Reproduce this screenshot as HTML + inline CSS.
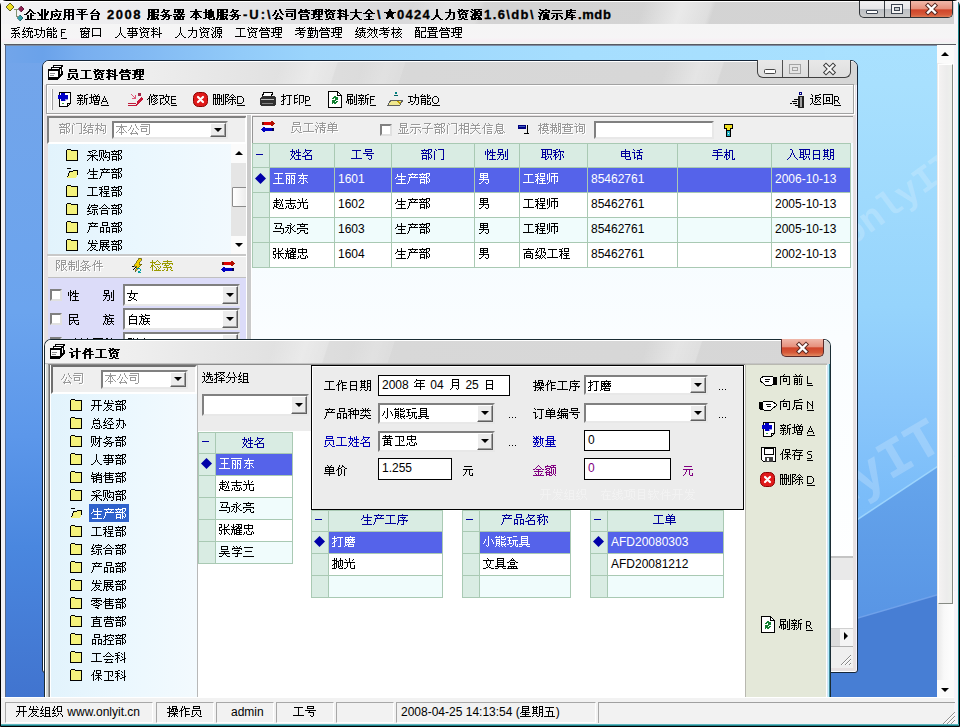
<!DOCTYPE html>
<html><head><meta charset="utf-8"><title>企业应用平台 2008</title><style>
html,body{margin:0;padding:0}
body{width:960px;height:727px;overflow:hidden;position:relative;background:#f1f1f5;font-family:"Liberation Sans",sans-serif;font-size:12px;color:#000}
div{position:absolute;box-sizing:border-box}
.t{white-space:nowrap;line-height:14px;height:14px}
.tb{white-space:nowrap;line-height:14px;height:14px;font-weight:bold;-webkit-text-stroke:.3px #000}
u{text-decoration:underline}
svg{position:absolute;overflow:visible}
.p{position:static;display:inline-block;vertical-align:top;shape-rendering:crispEdges;fill:none}
.g{color:#9a9a9a;text-shadow:1px 1px 0 #fff}
.sunk{border:1px solid;border-color:#808080 #fff #fff #808080}
.cb{background:#fff;border:2px solid;border-color:#808080 #e8e8e8 #e8e8e8 #808080}
.btn{background:#ececec;border:1px solid;border-color:#fff #606060 #606060 #fff;box-shadow:inset -1px -1px 0 #a0a0a0}
.arr{width:0;height:0;border-left:4px solid transparent;border-right:4px solid transparent;border-top:4px solid #000}
.hd{background:#d9ece3;color:#00009c;text-align:center;line-height:22px;white-space:nowrap;overflow:hidden}
.cell{white-space:nowrap;overflow:hidden;padding-left:2px}
</style></head>
<body>
<svg width="0" height="0" style="left:0;top:0"><defs><path id="g41" d="M3 4.5h1M3 5.5h1M2 6.5h1M4 6.5h1M2 7.5h1M4 7.5h1M1 8.5h1M5 8.5h1M1 9.5h5M0 10.5h1M6 10.5h1M0 11.5h1M6 11.5h1"/><path id="g44" d="M0 4.5h5M0 5.5h1M5 5.5h1M0 6.5h1M6 6.5h1M0 7.5h1M6 7.5h1M0 8.5h1M6 8.5h1M0 9.5h1M6 9.5h1M0 10.5h1M5 10.5h1M0 11.5h5"/><path id="g45" d="M0 4.5h5M0 5.5h1M0 6.5h1M0 7.5h5M0 8.5h1M0 9.5h1M0 10.5h1M0 11.5h5"/><path id="g46" d="M0 4.5h5M0 5.5h1M0 6.5h1M0 7.5h4M0 8.5h1M0 9.5h1M0 10.5h1M0 11.5h1"/><path id="g4c" d="M0 4.5h1M0 5.5h1M0 6.5h1M0 7.5h1M0 8.5h1M0 9.5h1M0 10.5h1M0 11.5h5"/><path id="g4e" d="M0 4.5h1M5 4.5h1M0 5.5h2M5 5.5h1M0 6.5h1M2 6.5h1M5 6.5h1M0 7.5h1M3 7.5h1M5 7.5h1M0 8.5h1M4 8.5h2M0 9.5h1M5 9.5h1M0 10.5h1M5 10.5h1M0 11.5h1M5 11.5h1"/><path id="g4f" d="M2 4.5h3M1 5.5h1M5 5.5h1M0 6.5h1M6 6.5h1M0 7.5h1M6 7.5h1M0 8.5h1M6 8.5h1M0 9.5h1M6 9.5h1M1 10.5h1M5 10.5h1M2 11.5h3"/><path id="g50" d="M0 4.5h4M0 5.5h1M4 5.5h1M0 6.5h1M4 6.5h1M0 7.5h1M4 7.5h1M0 8.5h4M0 9.5h1M0 10.5h1M0 11.5h1"/><path id="g52" d="M0 4.5h4M0 5.5h1M4 5.5h1M0 6.5h1M4 6.5h1M0 7.5h1M4 7.5h1M0 8.5h4M0 9.5h1M3 9.5h1M0 10.5h1M4 10.5h1M0 11.5h1M5 11.5h1"/><path id="g53" d="M1 4.5h4M0 5.5h1M0 6.5h1M1 7.5h3M4 8.5h1M4 9.5h1M4 10.5h1M0 11.5h4"/><path id="g2605" d="M5 2.5h1M5 3.5h1M4 4.5h3M0 5.5h11M2 6.5h7M3 7.5h5M3 8.5h5M3 9.5h2M6 9.5h2M2 10.5h2M7 10.5h2M2 11.5h1M8 11.5h1"/><path id="g4e09" d="M1 3.5h9M2 7.5h7M0 12.5h11"/><path id="g4e1a" d="M4 2.5h1M7 2.5h1M4 3.5h1M7 3.5h1M4 4.5h1M7 4.5h1M10 4.5h1M0 5.5h1M4 5.5h1M7 5.5h1M10 5.5h1M1 6.5h1M4 6.5h1M7 6.5h1M9 6.5h1M2 7.5h1M4 7.5h1M7 7.5h1M9 7.5h1M2 8.5h1M4 8.5h1M7 8.5h2M4 9.5h1M7 9.5h1M4 10.5h1M7 10.5h1M4 11.5h1M7 11.5h1M0 12.5h11"/><path id="g4e1c" d="M5 2.5h1M5 3.5h1M1 4.5h10M4 5.5h1M6 5.5h1M3 6.5h1M6 6.5h1M2 7.5h8M6 8.5h1M3 9.5h1M6 9.5h1M8 9.5h1M2 10.5h1M6 10.5h1M9 10.5h1M1 11.5h1M6 11.5h1M10 11.5h1M4 12.5h3"/><path id="g4e3d" d="M0 2.5h11M1 4.5h4M6 4.5h4M1 5.5h1M4 5.5h1M6 5.5h1M9 5.5h1M1 6.5h1M4 6.5h1M6 6.5h1M9 6.5h1M1 7.5h2M4 7.5h1M6 7.5h2M9 7.5h1M1 8.5h1M3 8.5h2M6 8.5h1M8 8.5h2M1 9.5h1M4 9.5h1M6 9.5h1M9 9.5h1M1 10.5h1M4 10.5h1M6 10.5h1M9 10.5h1M1 11.5h1M4 11.5h1M6 11.5h1M9 11.5h1M1 12.5h1M3 12.5h2M6 12.5h1M8 12.5h2"/><path id="g4e8b" d="M5 2.5h1M0 3.5h11M2 4.5h1M5 4.5h1M8 4.5h1M2 5.5h1M5 5.5h1M8 5.5h1M1 6.5h9M5 7.5h1M9 7.5h1M0 8.5h11M5 9.5h1M9 9.5h1M1 10.5h9M5 11.5h1M3 12.5h3"/><path id="g4e94" d="M1 3.5h9M5 4.5h1M5 5.5h1M5 6.5h1M2 7.5h7M4 8.5h1M8 8.5h1M4 9.5h1M8 9.5h1M4 10.5h1M8 10.5h1M4 11.5h1M8 11.5h1M0 12.5h11"/><path id="g4ea7" d="M5 2.5h1M1 3.5h10M3 4.5h1M8 4.5h1M4 5.5h1M7 5.5h1M2 6.5h9M2 7.5h1M2 8.5h1M2 9.5h1M1 10.5h1M1 11.5h1M0 12.5h1"/><path id="g4eae" d="M5 2.5h1M0 3.5h11M3 4.5h1M7 4.5h1M3 5.5h5M0 7.5h11M0 8.5h1M10 8.5h1M3 9.5h5M3 10.5h1M7 10.5h1M2 11.5h1M7 11.5h1M10 11.5h1M0 12.5h2M8 12.5h3"/><path id="g4eba" d="M5 2.5h1M5 3.5h1M5 4.5h1M5 5.5h1M5 6.5h1M5 7.5h1M4 8.5h1M6 8.5h1M4 9.5h1M6 9.5h1M3 10.5h1M7 10.5h1M2 11.5h1M8 11.5h1M0 12.5h2M9 12.5h2"/><path id="g4ef6" d="M3 2.5h1M7 2.5h1M3 3.5h1M5 3.5h1M7 3.5h1M2 4.5h1M5 4.5h1M7 4.5h1M2 5.5h1M4 5.5h6M1 6.5h3M7 6.5h1M0 7.5h1M2 7.5h1M7 7.5h1M2 8.5h1M4 8.5h7M2 9.5h1M7 9.5h1M2 10.5h1M7 10.5h1M2 11.5h1M7 11.5h1M2 12.5h1M7 12.5h1"/><path id="g4ef7" d="M3 2.5h1M6 2.5h1M3 3.5h1M6 3.5h2M2 4.5h1M5 4.5h1M8 4.5h1M2 5.5h3M9 5.5h2M1 6.5h2M5 6.5h1M8 6.5h1M0 7.5h1M2 7.5h1M5 7.5h1M8 7.5h1M2 8.5h1M5 8.5h1M8 8.5h1M2 9.5h1M5 9.5h1M8 9.5h1M2 10.5h1M5 10.5h1M8 10.5h1M2 11.5h1M4 11.5h1M8 11.5h1M2 12.5h2M8 12.5h1"/><path id="g4f01" d="M5 2.5h1M5 3.5h2M4 4.5h1M7 4.5h1M3 5.5h1M8 5.5h1M2 6.5h1M6 6.5h1M9 6.5h2M0 7.5h2M6 7.5h1M3 8.5h1M6 8.5h3M3 9.5h1M6 9.5h1M3 10.5h1M6 10.5h1M3 11.5h1M6 11.5h1M1 12.5h10"/><path id="g4f17" d="M5 2.5h1M5 3.5h1M4 4.5h1M6 4.5h1M3 5.5h1M7 5.5h1M2 6.5h1M8 6.5h1M0 7.5h2M3 7.5h1M7 7.5h1M9 7.5h2M3 8.5h1M7 8.5h1M3 9.5h1M7 9.5h1M2 10.5h1M4 10.5h1M6 10.5h1M8 10.5h1M1 11.5h1M5 11.5h1M9 11.5h1M0 12.5h1M4 12.5h1M10 12.5h1"/><path id="g4f1a" d="M5 2.5h1M4 3.5h1M6 3.5h1M3 4.5h1M7 4.5h1M2 5.5h1M8 5.5h1M0 6.5h2M3 6.5h5M9 6.5h2M1 9.5h9M4 10.5h1M3 11.5h1M8 11.5h1M2 12.5h8"/><path id="g4f5c" d="M3 2.5h1M5 2.5h1M3 3.5h1M5 3.5h1M2 4.5h1M5 4.5h6M2 5.5h1M4 5.5h1M6 5.5h1M1 6.5h3M6 6.5h1M0 7.5h1M2 7.5h1M6 7.5h4M2 8.5h1M6 8.5h1M2 9.5h1M6 9.5h1M2 10.5h1M6 10.5h5M2 11.5h1M6 11.5h1M2 12.5h1M6 12.5h1"/><path id="g4fdd" d="M3 2.5h1M5 2.5h5M3 3.5h1M5 3.5h1M9 3.5h1M2 4.5h1M5 4.5h1M9 4.5h1M2 5.5h1M5 5.5h5M1 6.5h2M7 6.5h1M0 7.5h1M2 7.5h1M4 7.5h7M2 8.5h1M7 8.5h1M2 9.5h1M6 9.5h3M2 10.5h1M5 10.5h1M7 10.5h1M9 10.5h1M2 11.5h1M4 11.5h1M7 11.5h1M10 11.5h1M2 12.5h1M7 12.5h1"/><path id="g4fe1" d="M3 2.5h1M6 2.5h1M3 3.5h1M7 3.5h1M2 4.5h1M4 4.5h7M2 5.5h1M1 6.5h2M5 6.5h5M0 7.5h1M2 7.5h1M2 8.5h1M5 8.5h5M2 9.5h1M2 10.5h1M5 10.5h5M2 11.5h1M5 11.5h1M9 11.5h1M2 12.5h1M5 12.5h5"/><path id="g4fee" d="M3 2.5h1M6 2.5h1M3 3.5h1M6 3.5h5M2 4.5h1M4 4.5h2M7 4.5h1M9 4.5h1M2 5.5h1M4 5.5h1M8 5.5h1M1 6.5h2M4 6.5h1M6 6.5h2M9 6.5h1M0 7.5h1M2 7.5h1M4 7.5h2M8 7.5h1M10 7.5h1M2 8.5h1M4 8.5h1M7 8.5h1M9 8.5h1M2 9.5h1M4 9.5h1M6 9.5h1M8 9.5h1M2 10.5h1M4 10.5h1M7 10.5h1M10 10.5h1M2 11.5h1M8 11.5h2M2 12.5h1M5 12.5h3"/><path id="g5143" d="M2 3.5h8M1 6.5h10M4 7.5h1M7 7.5h1M4 8.5h1M7 8.5h1M3 9.5h1M7 9.5h1M3 10.5h1M7 10.5h1M10 10.5h1M2 11.5h1M7 11.5h1M10 11.5h1M1 12.5h1M8 12.5h3"/><path id="g5149" d="M5 2.5h1M1 3.5h1M5 3.5h1M9 3.5h1M2 4.5h1M5 4.5h1M8 4.5h1M5 5.5h1M0 6.5h11M3 7.5h1M6 7.5h1M3 8.5h1M6 8.5h1M3 9.5h1M6 9.5h1M10 9.5h1M3 10.5h1M6 10.5h1M10 10.5h1M2 11.5h1M6 11.5h1M10 11.5h1M0 12.5h2M7 12.5h4"/><path id="g5165" d="M3 2.5h2M5 3.5h1M5 4.5h1M5 5.5h1M4 6.5h1M6 6.5h1M4 7.5h1M6 7.5h1M3 8.5h1M7 8.5h1M3 9.5h1M7 9.5h1M2 10.5h1M8 10.5h1M1 11.5h1M9 11.5h1M0 12.5h1M10 12.5h1"/><path id="g5168" d="M5 2.5h1M4 3.5h1M6 3.5h1M3 4.5h1M7 4.5h1M2 5.5h1M8 5.5h1M0 6.5h2M3 6.5h5M9 6.5h2M5 7.5h1M5 8.5h1M3 9.5h5M5 10.5h1M5 11.5h1M1 12.5h9"/><path id="g516c" d="M7 2.5h1M3 3.5h1M7 3.5h1M3 4.5h1M8 4.5h1M2 5.5h1M8 5.5h1M2 6.5h1M5 6.5h1M9 6.5h1M1 7.5h1M5 7.5h1M10 7.5h1M0 8.5h1M4 8.5h1M4 9.5h1M7 9.5h1M3 10.5h1M8 10.5h1M2 11.5h8M3 12.5h1M9 12.5h1"/><path id="g5173" d="M2 2.5h1M8 2.5h1M3 3.5h1M7 3.5h1M1 4.5h9M5 5.5h1M5 6.5h1M0 7.5h10M5 8.5h1M4 9.5h1M6 9.5h1M3 10.5h1M7 10.5h1M2 11.5h1M8 11.5h1M0 12.5h2M9 12.5h2"/><path id="g5177" d="M2 2.5h7M2 3.5h1M8 3.5h1M2 4.5h7M2 5.5h1M8 5.5h1M2 6.5h7M2 7.5h1M8 7.5h1M2 8.5h7M2 9.5h1M8 9.5h1M0 10.5h11M3 11.5h1M7 11.5h1M0 12.5h3M8 12.5h3"/><path id="g5206" d="M3 2.5h1M7 2.5h1M3 3.5h1M7 3.5h1M2 4.5h1M8 4.5h1M2 5.5h1M8 5.5h1M1 6.5h1M9 6.5h1M0 7.5h1M2 7.5h7M10 7.5h1M4 8.5h1M8 8.5h1M4 9.5h1M8 9.5h1M3 10.5h1M8 10.5h1M2 11.5h1M8 11.5h1M0 12.5h2M6 12.5h2"/><path id="g5220" d="M0 2.5h3M4 2.5h3M10 2.5h1M0 3.5h1M2 3.5h1M4 3.5h1M6 3.5h1M8 3.5h1M10 3.5h1M0 4.5h1M2 4.5h1M4 4.5h1M6 4.5h1M8 4.5h1M10 4.5h1M0 5.5h1M2 5.5h1M4 5.5h1M6 5.5h1M8 5.5h1M10 5.5h1M0 6.5h9M10 6.5h1M0 7.5h1M2 7.5h1M4 7.5h1M6 7.5h1M8 7.5h1M10 7.5h1M0 8.5h1M2 8.5h1M4 8.5h1M6 8.5h1M8 8.5h1M10 8.5h1M0 9.5h1M2 9.5h1M4 9.5h1M6 9.5h1M8 9.5h1M10 9.5h1M0 10.5h1M2 10.5h1M4 10.5h1M6 10.5h1M10 10.5h1M0 11.5h1M2 11.5h1M4 11.5h1M6 11.5h1M10 11.5h1M0 12.5h1M2 12.5h2M5 12.5h2M8 12.5h3"/><path id="g522b" d="M1 2.5h5M10 2.5h1M1 3.5h1M5 3.5h1M10 3.5h1M1 4.5h1M5 4.5h1M8 4.5h1M10 4.5h1M1 5.5h5M8 5.5h1M10 5.5h1M3 6.5h1M8 6.5h1M10 6.5h1M0 7.5h7M8 7.5h1M10 7.5h1M3 8.5h1M6 8.5h1M8 8.5h1M10 8.5h1M2 9.5h1M6 9.5h1M8 9.5h1M10 9.5h1M2 10.5h1M6 10.5h1M10 10.5h1M1 11.5h1M6 11.5h1M10 11.5h1M0 12.5h1M4 12.5h2M8 12.5h3"/><path id="g5236" d="M3 2.5h1M10 2.5h1M1 3.5h1M3 3.5h1M8 3.5h1M10 3.5h1M1 4.5h6M8 4.5h1M10 4.5h1M0 5.5h1M3 5.5h1M8 5.5h1M10 5.5h1M0 6.5h7M8 6.5h1M10 6.5h1M3 7.5h1M8 7.5h1M10 7.5h1M1 8.5h6M8 8.5h1M10 8.5h1M1 9.5h1M3 9.5h1M6 9.5h1M8 9.5h1M10 9.5h1M1 10.5h1M3 10.5h1M6 10.5h1M10 10.5h1M1 11.5h1M3 11.5h1M5 11.5h2M10 11.5h1M3 12.5h1M8 12.5h3"/><path id="g5237" d="M1 2.5h6M10 2.5h1M1 3.5h1M6 3.5h1M10 3.5h1M1 4.5h6M8 4.5h1M10 4.5h1M1 5.5h1M4 5.5h1M8 5.5h1M10 5.5h1M1 6.5h1M4 6.5h1M8 6.5h1M10 6.5h1M1 7.5h6M8 7.5h1M10 7.5h1M1 8.5h2M4 8.5h1M6 8.5h1M8 8.5h1M10 8.5h1M0 9.5h1M2 9.5h1M4 9.5h1M6 9.5h1M8 9.5h1M10 9.5h1M0 10.5h1M2 10.5h1M4 10.5h1M6 10.5h1M8 10.5h1M10 10.5h1M2 11.5h1M4 11.5h3M10 11.5h1M4 12.5h1M8 12.5h3"/><path id="g524d" d="M3 2.5h1M8 2.5h1M4 3.5h1M7 3.5h1M1 4.5h10M2 6.5h4M7 6.5h1M9 6.5h1M2 7.5h1M5 7.5h1M7 7.5h1M9 7.5h1M2 8.5h4M7 8.5h1M9 8.5h1M2 9.5h1M5 9.5h1M7 9.5h1M9 9.5h1M2 10.5h4M7 10.5h1M9 10.5h1M2 11.5h1M5 11.5h1M9 11.5h1M2 12.5h1M4 12.5h2M7 12.5h3"/><path id="g529b" d="M5 2.5h1M5 3.5h1M5 4.5h1M1 5.5h9M5 6.5h1M9 6.5h1M5 7.5h1M9 7.5h1M4 8.5h1M9 8.5h1M4 9.5h1M9 9.5h1M3 10.5h1M9 10.5h1M2 11.5h1M9 11.5h1M1 12.5h1M6 12.5h3"/><path id="g529e" d="M4 2.5h1M4 3.5h1M1 4.5h8M4 5.5h1M8 5.5h1M4 6.5h1M8 6.5h1M2 7.5h1M4 7.5h1M8 7.5h2M2 8.5h1M4 8.5h1M8 8.5h1M10 8.5h1M1 9.5h1M3 9.5h1M8 9.5h1M10 9.5h1M3 10.5h1M8 10.5h1M2 11.5h1M6 11.5h1M8 11.5h1M1 12.5h1M7 12.5h1"/><path id="g529f" d="M7 2.5h1M7 3.5h1M0 4.5h5M7 4.5h1M2 5.5h1M5 5.5h6M2 6.5h1M7 6.5h1M10 6.5h1M2 7.5h1M7 7.5h1M10 7.5h1M2 8.5h1M7 8.5h1M10 8.5h1M2 9.5h3M6 9.5h1M10 9.5h1M0 10.5h2M6 10.5h1M10 10.5h1M5 11.5h1M10 11.5h1M3 12.5h2M8 12.5h2"/><path id="g52a1" d="M3 2.5h1M3 3.5h6M2 4.5h2M7 4.5h1M1 5.5h1M4 5.5h1M6 5.5h1M5 6.5h1M3 7.5h2M6 7.5h2M0 8.5h3M5 8.5h1M8 8.5h3M2 9.5h7M4 10.5h1M8 10.5h1M3 11.5h1M8 11.5h1M1 12.5h2M6 12.5h2"/><path id="g52e4" d="M2 2.5h1M4 2.5h1M8 2.5h1M0 3.5h7M8 3.5h1M2 4.5h1M4 4.5h1M8 4.5h1M1 5.5h10M1 6.5h1M3 6.5h1M5 6.5h1M8 6.5h1M10 6.5h1M1 7.5h1M3 7.5h1M5 7.5h1M8 7.5h1M10 7.5h1M1 8.5h5M8 8.5h1M10 8.5h1M3 9.5h1M8 9.5h1M10 9.5h1M1 10.5h5M7 10.5h1M10 10.5h1M3 11.5h1M7 11.5h1M10 11.5h1M0 12.5h7M9 12.5h2"/><path id="g5355" d="M3 2.5h1M7 2.5h1M4 3.5h1M6 3.5h1M1 4.5h9M1 5.5h1M5 5.5h1M9 5.5h1M1 6.5h9M1 7.5h1M5 7.5h1M9 7.5h1M1 8.5h9M5 9.5h1M0 10.5h11M5 11.5h1M5 12.5h1"/><path id="g536b" d="M1 3.5h9M5 4.5h1M9 4.5h1M5 5.5h1M9 5.5h1M5 6.5h1M9 6.5h1M5 7.5h1M7 7.5h1M9 7.5h1M5 8.5h1M8 8.5h1M5 9.5h1M5 10.5h1M5 11.5h1M1 12.5h10"/><path id="g5370" d="M4 2.5h1M1 3.5h3M6 3.5h5M1 4.5h1M6 4.5h1M10 4.5h1M1 5.5h1M6 5.5h1M10 5.5h1M1 6.5h4M6 6.5h1M10 6.5h1M1 7.5h1M6 7.5h1M10 7.5h1M1 8.5h1M6 8.5h1M10 8.5h1M1 9.5h1M4 9.5h1M6 9.5h1M10 9.5h1M1 10.5h3M6 10.5h1M8 10.5h2M1 11.5h1M6 11.5h1M6 12.5h1"/><path id="g53d1" d="M2 2.5h1M5 2.5h1M8 2.5h1M2 3.5h1M5 3.5h1M9 3.5h1M1 4.5h1M5 4.5h1M1 5.5h10M4 6.5h1M4 7.5h5M4 8.5h1M8 8.5h1M3 9.5h1M5 9.5h1M7 9.5h1M2 10.5h1M6 10.5h1M1 11.5h1M5 11.5h1M7 11.5h2M0 12.5h1M3 12.5h2M9 12.5h2"/><path id="g53e3" d="M1 3.5h9M1 4.5h1M9 4.5h1M1 5.5h1M9 5.5h1M1 6.5h1M9 6.5h1M1 7.5h1M9 7.5h1M1 8.5h1M9 8.5h1M1 9.5h1M9 9.5h1M1 10.5h9M1 11.5h1M9 11.5h1"/><path id="g53f0" d="M5 2.5h1M4 3.5h1M3 4.5h1M7 4.5h1M2 5.5h1M8 5.5h1M1 6.5h9M9 7.5h1M2 8.5h7M2 9.5h1M8 9.5h1M2 10.5h1M8 10.5h1M2 11.5h1M8 11.5h1M2 12.5h7"/><path id="g53f7" d="M2 2.5h7M2 3.5h1M8 3.5h1M2 4.5h7M0 6.5h11M4 7.5h1M3 8.5h6M8 9.5h1M8 10.5h1M5 11.5h1M8 11.5h1M6 12.5h2"/><path id="g53f8" d="M1 2.5h9M9 3.5h1M0 4.5h8M9 4.5h1M9 5.5h1M1 6.5h6M9 6.5h1M1 7.5h1M6 7.5h1M9 7.5h1M1 8.5h1M6 8.5h1M9 8.5h1M1 9.5h6M9 9.5h1M9 10.5h1M9 11.5h1M6 12.5h3"/><path id="g5408" d="M5 2.5h1M4 3.5h1M6 3.5h1M3 4.5h1M7 4.5h1M2 5.5h1M8 5.5h1M0 6.5h2M3 6.5h5M9 6.5h2M2 8.5h7M2 9.5h1M8 9.5h1M2 10.5h1M8 10.5h1M2 11.5h7M2 12.5h1M8 12.5h1"/><path id="g540d" d="M3 2.5h1M3 3.5h7M3 4.5h1M8 4.5h1M2 5.5h1M4 5.5h1M7 5.5h1M1 6.5h1M5 6.5h2M5 7.5h1M3 8.5h7M0 9.5h4M9 9.5h1M3 10.5h1M9 10.5h1M3 11.5h1M9 11.5h1M3 12.5h7"/><path id="g540e" d="M7 2.5h3M2 3.5h5M2 4.5h1M2 5.5h9M2 6.5h1M2 7.5h1M2 8.5h1M4 8.5h6M2 9.5h1M4 9.5h1M9 9.5h1M1 10.5h1M4 10.5h1M9 10.5h1M1 11.5h1M4 11.5h6M0 12.5h1M4 12.5h1M9 12.5h1"/><path id="g5411" d="M4 2.5h1M3 3.5h1M0 4.5h10M0 5.5h1M9 5.5h1M0 6.5h1M3 6.5h4M9 6.5h1M0 7.5h1M3 7.5h1M6 7.5h1M9 7.5h1M0 8.5h1M3 8.5h1M6 8.5h1M9 8.5h1M0 9.5h1M3 9.5h4M9 9.5h1M0 10.5h1M9 10.5h1M0 11.5h1M9 11.5h1M0 12.5h1M7 12.5h3"/><path id="g5434" d="M2 2.5h7M2 3.5h1M8 3.5h1M2 4.5h1M8 4.5h1M2 5.5h7M2 7.5h8M5 8.5h1M0 9.5h11M4 10.5h1M6 10.5h1M3 11.5h1M7 11.5h1M0 12.5h3M8 12.5h3"/><path id="g5458" d="M2 2.5h7M2 3.5h1M8 3.5h1M2 4.5h7M1 6.5h9M1 7.5h1M9 7.5h1M1 8.5h1M5 8.5h1M9 8.5h1M1 9.5h1M5 9.5h1M9 9.5h1M1 10.5h1M4 10.5h1M6 10.5h1M9 10.5h1M3 11.5h1M7 11.5h1M0 12.5h3M8 12.5h3"/><path id="g54c1" d="M3 2.5h6M3 3.5h1M8 3.5h1M3 4.5h1M8 4.5h1M3 5.5h6M1 7.5h4M7 7.5h4M1 8.5h1M4 8.5h1M7 8.5h1M10 8.5h1M1 9.5h1M4 9.5h1M7 9.5h1M10 9.5h1M1 10.5h1M4 10.5h1M7 10.5h1M10 10.5h1M1 11.5h4M7 11.5h4M1 12.5h1M4 12.5h1M7 12.5h1M10 12.5h1"/><path id="g552e" d="M2 2.5h1M6 2.5h1M2 3.5h9M2 4.5h1M6 4.5h1M1 5.5h9M0 6.5h1M2 6.5h1M6 6.5h1M2 7.5h8M2 8.5h1M6 8.5h1M2 9.5h9M2 10.5h1M9 10.5h1M2 11.5h1M9 11.5h1M2 12.5h8"/><path id="g5668" d="M1 2.5h4M6 2.5h4M1 3.5h1M4 3.5h1M6 3.5h1M9 3.5h1M1 4.5h1M4 4.5h1M6 4.5h1M9 4.5h1M1 5.5h4M6 5.5h4M5 6.5h1M8 6.5h1M0 7.5h11M3 8.5h1M7 8.5h1M0 9.5h5M6 9.5h5M1 10.5h1M4 10.5h1M6 10.5h1M9 10.5h1M1 11.5h1M4 11.5h1M6 11.5h1M9 11.5h1M1 12.5h4M6 12.5h4"/><path id="g56de" d="M1 2.5h10M1 3.5h1M10 3.5h1M1 4.5h1M10 4.5h1M1 5.5h1M4 5.5h4M10 5.5h1M1 6.5h1M4 6.5h1M7 6.5h1M10 6.5h1M1 7.5h1M4 7.5h1M7 7.5h1M10 7.5h1M1 8.5h1M4 8.5h4M10 8.5h1M1 9.5h1M4 9.5h1M7 9.5h1M10 9.5h1M1 10.5h1M10 10.5h1M1 11.5h10M1 12.5h1M10 12.5h1"/><path id="g5728" d="M5 2.5h1M5 3.5h1M1 4.5h10M4 5.5h1M3 6.5h1M7 6.5h1M2 7.5h2M7 7.5h1M1 8.5h1M3 8.5h1M5 8.5h5M3 9.5h1M7 9.5h1M3 10.5h1M7 10.5h1M3 11.5h1M7 11.5h1M3 12.5h8"/><path id="g5730" d="M2 2.5h1M7 2.5h1M2 3.5h1M5 3.5h1M7 3.5h1M2 4.5h1M5 4.5h1M7 4.5h1M9 4.5h1M0 5.5h4M5 5.5h1M7 5.5h3M2 6.5h1M5 6.5h3M9 6.5h1M2 7.5h1M4 7.5h2M7 7.5h1M9 7.5h1M2 8.5h1M5 8.5h1M7 8.5h1M9 8.5h1M2 9.5h1M5 9.5h1M7 9.5h3M2 10.5h2M5 10.5h1M7 10.5h1M10 10.5h1M0 11.5h2M5 11.5h1M10 11.5h1M6 12.5h5"/><path id="g589e" d="M2 2.5h1M5 2.5h1M9 2.5h1M2 3.5h1M6 3.5h1M8 3.5h1M2 4.5h1M4 4.5h7M0 5.5h5M7 5.5h1M10 5.5h1M2 6.5h1M4 6.5h1M6 6.5h3M10 6.5h1M2 7.5h1M4 7.5h1M7 7.5h1M10 7.5h1M2 8.5h1M4 8.5h7M2 9.5h1M5 9.5h1M9 9.5h1M2 10.5h2M5 10.5h5M0 11.5h2M5 11.5h1M9 11.5h1M5 12.5h5"/><path id="g5927" d="M5 2.5h1M5 3.5h1M5 4.5h1M0 5.5h11M5 6.5h1M5 7.5h1M4 8.5h1M6 8.5h1M4 9.5h1M6 9.5h1M3 10.5h1M7 10.5h1M2 11.5h1M8 11.5h1M0 12.5h2M9 12.5h2"/><path id="g5973" d="M4 2.5h1M4 3.5h1M4 4.5h1M0 5.5h11M3 6.5h1M7 6.5h1M3 7.5h1M7 7.5h1M2 8.5h1M7 8.5h1M2 9.5h3M6 9.5h1M5 10.5h2M4 11.5h1M7 11.5h2M1 12.5h3M9 12.5h1"/><path id="g59d3" d="M2 2.5h1M8 2.5h1M2 3.5h1M6 3.5h1M8 3.5h1M0 4.5h5M6 4.5h1M8 4.5h1M2 5.5h1M4 5.5h1M6 5.5h5M2 6.5h1M4 6.5h2M8 6.5h1M1 7.5h1M4 7.5h1M8 7.5h1M1 8.5h1M3 8.5h1M6 8.5h5M2 9.5h2M8 9.5h1M2 10.5h1M4 10.5h1M8 10.5h1M1 11.5h1M4 11.5h1M8 11.5h1M0 12.5h1M5 12.5h6"/><path id="g5b50" d="M2 2.5h7M7 3.5h1M6 4.5h1M5 5.5h1M5 6.5h1M0 7.5h11M5 8.5h1M5 9.5h1M5 10.5h1M3 11.5h1M5 11.5h1M4 12.5h1"/><path id="g5b58" d="M4 2.5h1M0 3.5h11M3 4.5h1M2 5.5h1M4 5.5h6M2 6.5h1M8 6.5h1M1 7.5h2M7 7.5h1M0 8.5h1M2 8.5h9M2 9.5h1M7 9.5h1M2 10.5h1M7 10.5h1M2 11.5h1M7 11.5h1M2 12.5h1M5 12.5h3"/><path id="g5b66" d="M2 2.5h1M5 2.5h1M9 2.5h1M3 3.5h1M6 3.5h1M8 3.5h1M1 4.5h10M1 5.5h1M10 5.5h1M3 6.5h6M7 7.5h1M6 8.5h1M1 9.5h10M6 10.5h1M6 11.5h1M4 12.5h3"/><path id="g5c0f" d="M5 2.5h1M5 3.5h1M5 4.5h1M2 5.5h1M5 5.5h1M8 5.5h1M2 6.5h1M5 6.5h1M9 6.5h1M1 7.5h1M5 7.5h1M9 7.5h1M1 8.5h1M5 8.5h1M10 8.5h1M0 9.5h1M5 9.5h1M10 9.5h1M5 10.5h1M3 11.5h1M5 11.5h1M4 12.5h1"/><path id="g5c55" d="M1 2.5h9M1 3.5h1M9 3.5h1M1 4.5h9M1 5.5h1M4 5.5h1M7 5.5h1M1 6.5h9M1 7.5h1M4 7.5h1M7 7.5h1M1 8.5h10M1 9.5h1M3 9.5h1M6 9.5h1M9 9.5h1M1 10.5h1M3 10.5h1M7 10.5h2M0 11.5h1M3 11.5h1M5 11.5h1M8 11.5h1M0 12.5h1M3 12.5h2M9 12.5h2"/><path id="g5de5" d="M1 3.5h9M5 4.5h1M5 5.5h1M5 6.5h1M5 7.5h1M5 8.5h1M5 9.5h1M5 10.5h1M0 11.5h11"/><path id="g5e08" d="M2 2.5h1M4 2.5h7M0 3.5h1M2 3.5h1M7 3.5h1M0 4.5h1M2 4.5h1M7 4.5h1M0 5.5h1M2 5.5h1M4 5.5h7M0 6.5h1M2 6.5h1M4 6.5h1M7 6.5h1M10 6.5h1M0 7.5h1M2 7.5h1M4 7.5h1M7 7.5h1M10 7.5h1M0 8.5h1M2 8.5h1M4 8.5h1M7 8.5h1M10 8.5h1M2 9.5h1M4 9.5h1M7 9.5h1M10 9.5h1M2 10.5h1M4 10.5h1M7 10.5h1M9 10.5h2M1 11.5h1M7 11.5h1M0 12.5h1M7 12.5h1"/><path id="g5e73" d="M1 2.5h9M5 3.5h1M2 4.5h1M5 4.5h1M8 4.5h1M3 5.5h1M5 5.5h1M7 5.5h1M5 6.5h1M0 7.5h11M5 8.5h1M5 9.5h1M5 10.5h1M5 11.5h1M5 12.5h1"/><path id="g5e74" d="M2 2.5h1M2 3.5h9M1 4.5h1M6 4.5h1M0 5.5h1M6 5.5h1M2 6.5h8M2 7.5h1M6 7.5h1M2 8.5h1M6 8.5h1M0 9.5h11M6 10.5h1M6 11.5h1M6 12.5h1"/><path id="g5e8f" d="M5 2.5h1M1 3.5h10M1 4.5h1M1 5.5h1M3 5.5h6M1 6.5h1M5 6.5h1M7 6.5h1M1 7.5h1M6 7.5h1M1 8.5h10M1 9.5h1M6 9.5h1M9 9.5h1M1 10.5h1M6 10.5h1M0 11.5h1M6 11.5h1M0 12.5h1M4 12.5h3"/><path id="g5e93" d="M6 2.5h1M2 3.5h9M2 4.5h1M6 4.5h1M2 5.5h9M2 6.5h1M5 6.5h1M2 7.5h1M4 7.5h1M7 7.5h1M2 8.5h1M4 8.5h6M2 9.5h1M7 9.5h1M2 10.5h9M1 11.5h1M7 11.5h1M0 12.5h1M7 12.5h1"/><path id="g5e94" d="M5 2.5h1M6 3.5h1M1 4.5h10M1 5.5h1M1 6.5h1M5 6.5h1M9 6.5h1M1 7.5h1M3 7.5h1M6 7.5h1M9 7.5h1M1 8.5h1M4 8.5h1M6 8.5h1M9 8.5h1M1 9.5h1M4 9.5h1M8 9.5h1M1 10.5h1M8 10.5h1M0 11.5h1M7 11.5h1M0 12.5h1M3 12.5h8"/><path id="g5f00" d="M1 2.5h9M3 3.5h1M7 3.5h1M3 4.5h1M7 4.5h1M3 5.5h1M7 5.5h1M3 6.5h1M7 6.5h1M0 7.5h11M3 8.5h1M7 8.5h1M2 9.5h1M7 9.5h1M2 10.5h1M7 10.5h1M1 11.5h1M7 11.5h1M0 12.5h1M7 12.5h1"/><path id="g5f20" d="M0 2.5h3M5 2.5h1M9 2.5h1M2 3.5h1M5 3.5h1M9 3.5h1M2 4.5h1M5 4.5h1M8 4.5h1M0 5.5h3M5 5.5h3M0 6.5h1M5 6.5h1M0 7.5h1M3 7.5h8M0 8.5h3M5 8.5h1M7 8.5h1M2 9.5h1M5 9.5h1M7 9.5h1M2 10.5h1M5 10.5h1M8 10.5h1M0 11.5h1M2 11.5h1M5 11.5h2M9 11.5h1M1 12.5h1M5 12.5h1M10 12.5h1"/><path id="g5fd7" d="M5 2.5h1M5 3.5h1M0 4.5h11M5 5.5h1M5 6.5h1M1 7.5h9M5 8.5h1M3 9.5h1M6 9.5h1M9 9.5h1M1 10.5h1M3 10.5h1M6 10.5h1M8 10.5h1M10 10.5h1M1 11.5h1M3 11.5h1M8 11.5h1M10 11.5h1M0 12.5h1M4 12.5h5"/><path id="g5fe0" d="M5 2.5h1M1 3.5h9M1 4.5h1M5 4.5h1M9 4.5h1M1 5.5h1M5 5.5h1M9 5.5h1M1 6.5h9M5 7.5h1M5 8.5h1M3 9.5h1M6 9.5h1M9 9.5h1M1 10.5h1M3 10.5h1M8 10.5h1M10 10.5h1M1 11.5h1M3 11.5h1M8 11.5h1M10 11.5h1M0 12.5h1M4 12.5h5"/><path id="g6027" d="M2 2.5h1M7 2.5h1M2 3.5h1M5 3.5h1M7 3.5h1M0 4.5h1M2 4.5h2M5 4.5h1M7 4.5h1M0 5.5h1M2 5.5h1M4 5.5h7M0 6.5h1M2 6.5h1M4 6.5h1M7 6.5h1M0 7.5h1M2 7.5h2M7 7.5h1M2 8.5h1M5 8.5h5M2 9.5h1M7 9.5h1M2 10.5h1M7 10.5h1M2 11.5h1M7 11.5h1M2 12.5h1M4 12.5h7"/><path id="g603b" d="M3 2.5h1M7 2.5h1M4 3.5h1M6 3.5h1M2 4.5h7M2 5.5h1M8 5.5h1M2 6.5h1M8 6.5h1M2 7.5h7M2 8.5h1M8 8.5h1M5 9.5h1M9 9.5h1M1 10.5h1M3 10.5h1M6 10.5h1M8 10.5h1M10 10.5h1M1 11.5h1M3 11.5h1M8 11.5h1M10 11.5h1M0 12.5h1M4 12.5h5"/><path id="g606f" d="M4 2.5h1M2 3.5h7M2 4.5h1M8 4.5h1M2 5.5h7M2 6.5h1M8 6.5h1M2 7.5h7M2 8.5h1M8 8.5h1M2 9.5h7M1 10.5h1M3 10.5h1M5 10.5h1M9 10.5h1M1 11.5h1M3 11.5h1M6 11.5h1M8 11.5h1M10 11.5h1M0 12.5h1M4 12.5h5"/><path id="g624b" d="M6 2.5h4M1 3.5h5M5 4.5h1M1 5.5h9M5 6.5h1M5 7.5h1M0 8.5h11M5 9.5h1M5 10.5h1M5 11.5h1M4 12.5h2"/><path id="g6253" d="M2 2.5h1M2 3.5h1M5 3.5h6M0 4.5h5M8 4.5h1M2 5.5h1M8 5.5h1M2 6.5h1M4 6.5h1M8 6.5h1M2 7.5h2M8 7.5h1M1 8.5h2M8 8.5h1M0 9.5h1M2 9.5h1M8 9.5h1M2 10.5h1M8 10.5h1M2 11.5h1M8 11.5h1M0 12.5h3M6 12.5h3"/><path id="g629b" d="M2 2.5h1M4 2.5h1M8 2.5h1M2 3.5h1M4 3.5h1M8 3.5h1M0 4.5h5M7 4.5h4M2 5.5h1M4 5.5h3M8 5.5h1M10 5.5h1M2 6.5h1M4 6.5h1M6 6.5h1M8 6.5h1M10 6.5h1M2 7.5h3M6 7.5h1M8 7.5h1M10 7.5h1M1 8.5h2M4 8.5h1M6 8.5h1M8 8.5h1M10 8.5h1M0 9.5h1M2 9.5h1M4 9.5h1M6 9.5h1M8 9.5h1M10 9.5h1M2 10.5h1M4 10.5h1M6 10.5h2M9 10.5h1M2 11.5h1M4 11.5h1M6 11.5h1M10 11.5h1M0 12.5h4M7 12.5h4"/><path id="g62e9" d="M2 2.5h1M4 2.5h7M2 3.5h1M6 3.5h1M9 3.5h1M0 4.5h5M7 4.5h2M2 5.5h1M6 5.5h1M9 5.5h1M2 6.5h1M4 6.5h2M10 6.5h1M2 7.5h2M7 7.5h1M1 8.5h2M5 8.5h5M0 9.5h1M2 9.5h1M7 9.5h1M2 10.5h1M4 10.5h7M2 11.5h1M7 11.5h1M0 12.5h3M7 12.5h1"/><path id="g63a7" d="M2 2.5h1M7 2.5h1M2 3.5h1M4 3.5h7M0 4.5h5M10 4.5h1M2 5.5h1M6 5.5h1M8 5.5h1M2 6.5h1M5 6.5h1M9 6.5h1M2 7.5h3M10 7.5h1M1 8.5h2M5 8.5h5M0 9.5h1M2 9.5h1M7 9.5h1M2 10.5h1M7 10.5h1M2 11.5h1M7 11.5h1M0 12.5h3M4 12.5h7"/><path id="g64cd" d="M2 2.5h1M5 2.5h5M2 3.5h1M5 3.5h1M9 3.5h1M0 4.5h4M5 4.5h5M2 5.5h1M4 5.5h3M8 5.5h3M2 6.5h1M4 6.5h1M6 6.5h1M8 6.5h1M10 6.5h1M2 7.5h5M8 7.5h3M0 8.5h3M7 8.5h1M2 9.5h9M2 10.5h1M6 10.5h3M2 11.5h1M5 11.5h1M7 11.5h1M9 11.5h1M1 12.5h2M4 12.5h1M7 12.5h1M10 12.5h1"/><path id="g6539" d="M7 2.5h1M0 3.5h5M7 3.5h1M4 4.5h1M6 4.5h5M4 5.5h2M9 5.5h1M1 6.5h4M6 6.5h1M9 6.5h1M1 7.5h1M6 7.5h1M9 7.5h1M1 8.5h1M6 8.5h1M9 8.5h1M1 9.5h1M7 9.5h2M1 10.5h1M3 10.5h1M7 10.5h2M1 11.5h2M6 11.5h1M9 11.5h1M1 12.5h1M4 12.5h2M10 12.5h1"/><path id="g653f" d="M7 2.5h1M0 3.5h6M7 3.5h1M3 4.5h1M7 4.5h4M3 5.5h1M6 5.5h2M9 5.5h1M1 6.5h1M3 6.5h3M7 6.5h1M9 6.5h1M1 7.5h1M3 7.5h1M7 7.5h1M9 7.5h1M1 8.5h1M3 8.5h1M7 8.5h1M9 8.5h1M1 9.5h1M3 9.5h1M8 9.5h1M1 10.5h1M3 10.5h3M8 10.5h1M0 11.5h3M7 11.5h1M9 11.5h1M5 12.5h2M10 12.5h1"/><path id="g6548" d="M2 2.5h1M7 2.5h1M3 3.5h1M7 3.5h1M0 4.5h6M7 4.5h4M2 5.5h1M4 5.5h1M6 5.5h2M9 5.5h1M1 6.5h1M5 6.5h1M7 6.5h1M9 6.5h1M0 7.5h1M4 7.5h1M7 7.5h1M9 7.5h1M2 8.5h1M4 8.5h1M7 8.5h1M9 8.5h1M3 9.5h1M8 9.5h1M2 10.5h1M4 10.5h1M8 10.5h1M1 11.5h1M7 11.5h1M9 11.5h1M0 12.5h1M5 12.5h2M10 12.5h1"/><path id="g6570" d="M0 2.5h1M3 2.5h1M5 2.5h1M7 2.5h1M1 3.5h1M3 3.5h2M7 3.5h1M0 4.5h6M7 4.5h4M2 5.5h2M6 5.5h2M9 5.5h1M1 6.5h1M3 6.5h2M7 6.5h1M9 6.5h1M0 7.5h1M3 7.5h1M5 7.5h1M7 7.5h1M9 7.5h1M0 8.5h6M7 8.5h1M9 8.5h1M2 9.5h1M4 9.5h1M7 9.5h1M9 9.5h1M1 10.5h2M4 10.5h1M8 10.5h1M3 11.5h1M7 11.5h1M9 11.5h1M0 12.5h3M4 12.5h3M10 12.5h1"/><path id="g6587" d="M4 2.5h1M5 3.5h1M0 4.5h11M3 5.5h1M7 5.5h1M3 6.5h1M7 6.5h1M3 7.5h1M7 7.5h1M4 8.5h1M6 8.5h1M4 9.5h1M6 9.5h1M5 10.5h1M3 11.5h2M6 11.5h2M0 12.5h3M8 12.5h3"/><path id="g6599" d="M2 2.5h1M8 2.5h1M0 3.5h1M2 3.5h1M4 3.5h2M8 3.5h1M1 4.5h3M6 4.5h1M8 4.5h1M2 5.5h1M8 5.5h1M0 6.5h6M8 6.5h1M2 7.5h1M6 7.5h1M8 7.5h1M2 8.5h2M8 8.5h3M1 9.5h2M4 9.5h5M0 10.5h1M2 10.5h1M8 10.5h1M2 11.5h1M8 11.5h1M2 12.5h1M8 12.5h1"/><path id="g65b0" d="M3 2.5h1M9 2.5h2M0 3.5h6M7 3.5h2M1 4.5h1M5 4.5h1M7 4.5h1M2 5.5h1M4 5.5h1M7 5.5h1M0 6.5h6M7 6.5h4M3 7.5h1M7 7.5h1M9 7.5h1M0 8.5h6M7 8.5h1M9 8.5h1M3 9.5h1M7 9.5h1M9 9.5h1M1 10.5h1M3 10.5h1M5 10.5h1M7 10.5h1M9 10.5h1M0 11.5h1M3 11.5h1M6 11.5h1M9 11.5h1M2 12.5h2M5 12.5h1M9 12.5h1"/><path id="g65cf" d="M2 2.5h1M6 2.5h1M3 3.5h1M6 3.5h5M0 4.5h6M2 5.5h1M6 5.5h1M2 6.5h3M6 6.5h5M2 7.5h1M4 7.5h2M8 7.5h1M2 8.5h1M4 8.5h1M8 8.5h1M1 9.5h1M4 9.5h7M1 10.5h1M4 10.5h1M8 10.5h1M0 11.5h1M2 11.5h1M4 11.5h1M7 11.5h1M9 11.5h1M0 12.5h1M3 12.5h1M5 12.5h2M10 12.5h1"/><path id="g65e5" d="M2 3.5h7M2 4.5h1M8 4.5h1M2 5.5h1M8 5.5h1M2 6.5h1M8 6.5h1M2 7.5h7M2 8.5h1M8 8.5h1M2 9.5h1M8 9.5h1M2 10.5h1M8 10.5h1M2 11.5h7M2 12.5h1M8 12.5h1"/><path id="g661f" d="M2 2.5h7M2 3.5h1M8 3.5h1M2 4.5h7M2 5.5h1M8 5.5h1M2 6.5h7M2 7.5h1M5 7.5h1M1 8.5h9M0 9.5h1M5 9.5h1M2 10.5h7M5 11.5h1M0 12.5h11"/><path id="g663e" d="M2 2.5h7M2 3.5h1M8 3.5h1M2 4.5h7M2 5.5h1M8 5.5h1M2 6.5h7M4 7.5h1M6 7.5h1M1 8.5h1M4 8.5h1M6 8.5h1M9 8.5h1M2 9.5h1M4 9.5h1M6 9.5h1M9 9.5h1M2 10.5h1M4 10.5h1M6 10.5h1M8 10.5h1M4 11.5h1M6 11.5h1M0 12.5h11"/><path id="g6708" d="M3 2.5h7M3 3.5h1M9 3.5h1M3 4.5h1M9 4.5h1M3 5.5h7M3 6.5h1M9 6.5h1M3 7.5h1M9 7.5h1M3 8.5h7M3 9.5h1M9 9.5h1M3 10.5h1M9 10.5h1M2 11.5h1M7 11.5h1M9 11.5h1M1 12.5h1M8 12.5h1"/><path id="g670d" d="M1 2.5h4M6 2.5h5M1 3.5h1M4 3.5h1M6 3.5h1M10 3.5h1M1 4.5h1M4 4.5h1M6 4.5h1M10 4.5h1M1 5.5h4M6 5.5h1M8 5.5h3M1 6.5h1M4 6.5h1M6 6.5h1M1 7.5h1M4 7.5h1M6 7.5h5M1 8.5h4M6 8.5h1M10 8.5h1M1 9.5h1M4 9.5h1M6 9.5h1M8 9.5h2M1 10.5h1M4 10.5h1M6 10.5h1M9 10.5h1M0 11.5h1M4 11.5h1M6 11.5h1M8 11.5h1M10 11.5h1M0 12.5h1M3 12.5h2M6 12.5h2M10 12.5h1"/><path id="g671f" d="M1 2.5h1M4 2.5h1M7 2.5h4M0 3.5h6M7 3.5h1M10 3.5h1M1 4.5h1M4 4.5h1M7 4.5h1M10 4.5h1M1 5.5h4M7 5.5h4M1 6.5h1M4 6.5h1M7 6.5h1M10 6.5h1M1 7.5h4M7 7.5h1M10 7.5h1M1 8.5h1M4 8.5h1M7 8.5h4M0 9.5h6M7 9.5h1M10 9.5h1M7 10.5h1M10 10.5h1M1 11.5h1M4 11.5h1M7 11.5h1M10 11.5h1M0 12.5h1M5 12.5h2M9 12.5h2"/><path id="g672c" d="M5 2.5h1M5 3.5h1M0 4.5h11M4 5.5h3M3 6.5h1M5 6.5h1M7 6.5h1M3 7.5h1M5 7.5h1M7 7.5h1M2 8.5h1M5 8.5h1M8 8.5h1M1 9.5h1M5 9.5h1M9 9.5h1M0 10.5h1M3 10.5h5M10 10.5h1M5 11.5h1M5 12.5h1"/><path id="g673a" d="M2 2.5h1M2 3.5h1M5 3.5h4M2 4.5h1M5 4.5h1M8 4.5h1M0 5.5h6M8 5.5h1M2 6.5h1M5 6.5h1M8 6.5h1M1 7.5h3M5 7.5h1M8 7.5h1M1 8.5h2M4 8.5h2M8 8.5h1M0 9.5h1M2 9.5h1M5 9.5h1M8 9.5h1M0 10.5h1M2 10.5h1M5 10.5h1M8 10.5h1M2 11.5h1M4 11.5h1M8 11.5h1M10 11.5h1M2 12.5h2M8 12.5h3"/><path id="g6761" d="M3 2.5h1M3 3.5h6M2 4.5h1M4 4.5h1M7 4.5h1M1 5.5h1M5 5.5h2M4 6.5h1M6 6.5h1M2 7.5h2M5 7.5h1M7 7.5h2M0 8.5h2M5 8.5h1M9 8.5h2M2 9.5h7M3 10.5h1M5 10.5h1M7 10.5h1M2 11.5h1M5 11.5h1M8 11.5h1M0 12.5h2M3 12.5h3M9 12.5h1"/><path id="g6784" d="M2 2.5h1M6 2.5h1M2 3.5h1M6 3.5h1M0 4.5h5M6 4.5h5M2 5.5h1M5 5.5h1M10 5.5h1M2 6.5h1M6 6.5h1M10 6.5h1M1 7.5h3M6 7.5h1M10 7.5h1M1 8.5h2M4 8.5h2M8 8.5h1M10 8.5h1M0 9.5h1M2 9.5h1M5 9.5h4M10 9.5h1M2 10.5h1M8 10.5h1M10 10.5h1M2 11.5h1M10 11.5h1M2 12.5h1M8 12.5h2"/><path id="g67e5" d="M5 2.5h1M0 3.5h11M3 4.5h1M5 4.5h1M7 4.5h1M2 5.5h1M5 5.5h1M8 5.5h1M0 6.5h11M2 7.5h1M8 7.5h1M2 8.5h7M2 9.5h1M8 9.5h1M2 10.5h7M0 12.5h11"/><path id="g6838" d="M2 2.5h1M7 2.5h1M2 3.5h1M8 3.5h1M0 4.5h11M2 5.5h1M7 5.5h1M2 6.5h1M6 6.5h1M9 6.5h1M1 7.5h3M5 7.5h4M1 8.5h2M4 8.5h1M7 8.5h1M10 8.5h1M0 9.5h1M2 9.5h1M6 9.5h1M9 9.5h1M2 10.5h1M5 10.5h1M8 10.5h1M2 11.5h1M7 11.5h1M9 11.5h1M2 12.5h1M4 12.5h3M10 12.5h1"/><path id="g68c0" d="M2 2.5h1M7 2.5h1M2 3.5h1M6 3.5h1M8 3.5h1M0 4.5h6M9 4.5h1M2 5.5h1M4 5.5h1M10 5.5h1M2 6.5h1M5 6.5h5M1 7.5h3M1 8.5h2M4 8.5h1M7 8.5h1M10 8.5h1M0 9.5h1M2 9.5h1M5 9.5h1M8 9.5h1M10 9.5h1M2 10.5h1M6 10.5h1M9 10.5h1M2 11.5h1M6 11.5h1M8 11.5h1M2 12.5h1M4 12.5h7"/><path id="g6a21" d="M2 2.5h1M6 2.5h1M8 2.5h1M2 3.5h1M4 3.5h7M0 4.5h4M6 4.5h1M8 4.5h1M2 5.5h1M5 5.5h5M2 6.5h2M5 6.5h1M9 6.5h1M1 7.5h2M4 7.5h6M1 8.5h2M5 8.5h1M9 8.5h1M0 9.5h1M2 9.5h1M4 9.5h7M2 10.5h1M7 10.5h1M2 11.5h1M6 11.5h1M8 11.5h1M2 12.5h1M4 12.5h2M9 12.5h2"/><path id="g6c11" d="M1 2.5h9M1 3.5h1M9 3.5h1M1 4.5h1M9 4.5h1M1 5.5h9M1 6.5h1M5 6.5h1M1 7.5h1M5 7.5h1M1 8.5h10M1 9.5h1M6 9.5h1M1 10.5h1M4 10.5h1M6 10.5h1M10 10.5h1M1 11.5h1M3 11.5h1M7 11.5h1M10 11.5h1M1 12.5h2M8 12.5h3"/><path id="g6c38" d="M5 2.5h1M6 3.5h1M2 4.5h4M9 4.5h1M5 5.5h1M8 5.5h1M0 6.5h4M5 6.5h1M7 6.5h1M3 7.5h1M5 7.5h2M2 8.5h1M5 8.5h1M7 8.5h1M2 9.5h1M5 9.5h1M8 9.5h1M1 10.5h1M5 10.5h1M9 10.5h2M0 11.5h1M3 11.5h1M5 11.5h1M4 12.5h1"/><path id="g6cbb" d="M1 2.5h1M7 2.5h1M2 3.5h1M7 3.5h1M0 4.5h1M6 4.5h1M1 5.5h1M3 5.5h1M5 5.5h1M9 5.5h1M2 6.5h9M2 7.5h1M10 7.5h1M0 8.5h2M5 8.5h5M1 9.5h1M5 9.5h1M9 9.5h1M1 10.5h1M5 10.5h1M9 10.5h1M1 11.5h1M5 11.5h5M1 12.5h1M5 12.5h1M9 12.5h1"/><path id="g6e05" d="M1 2.5h1M7 2.5h1M2 3.5h1M4 3.5h7M7 4.5h1M0 5.5h1M3 5.5h1M5 5.5h5M1 6.5h1M3 6.5h1M7 6.5h1M2 7.5h1M4 7.5h7M2 8.5h1M5 8.5h1M9 8.5h1M0 9.5h2M5 9.5h3M9 9.5h1M1 10.5h1M5 10.5h1M7 10.5h3M1 11.5h1M5 11.5h1M9 11.5h1M1 12.5h1M5 12.5h1M8 12.5h2"/><path id="g6e90" d="M1 2.5h1M4 2.5h7M2 3.5h1M4 3.5h1M8 3.5h1M0 4.5h1M4 4.5h1M6 4.5h5M1 5.5h1M4 5.5h1M6 5.5h1M10 5.5h1M3 6.5h2M6 6.5h5M2 7.5h1M4 7.5h1M6 7.5h1M10 7.5h1M2 8.5h1M4 8.5h1M6 8.5h5M0 9.5h2M4 9.5h1M8 9.5h1M1 10.5h1M4 10.5h1M6 10.5h1M8 10.5h2M1 11.5h1M3 11.5h1M5 11.5h1M8 11.5h1M10 11.5h1M1 12.5h2M4 12.5h1M7 12.5h2M10 12.5h1"/><path id="g6f14" d="M1 2.5h1M7 2.5h1M2 3.5h1M4 3.5h7M4 4.5h1M10 4.5h1M0 5.5h1M3 5.5h8M1 6.5h1M3 6.5h1M7 6.5h1M2 7.5h1M5 7.5h5M2 8.5h1M5 8.5h1M7 8.5h1M9 8.5h1M0 9.5h2M5 9.5h5M1 10.5h1M5 10.5h1M7 10.5h1M9 10.5h1M1 11.5h1M5 11.5h5M1 12.5h1M4 12.5h2M9 12.5h2"/><path id="g718a" d="M1 2.5h1M4 2.5h1M6 2.5h1M9 2.5h1M0 3.5h5M6 3.5h3M6 4.5h1M10 4.5h1M1 5.5h4M6 5.5h5M1 6.5h1M4 6.5h1M1 7.5h4M6 7.5h1M9 7.5h1M1 8.5h1M4 8.5h1M6 8.5h3M1 9.5h4M6 9.5h1M10 9.5h1M1 10.5h1M4 10.5h1M6 10.5h5M1 11.5h1M3 11.5h1M6 11.5h1M9 11.5h1M0 12.5h1M4 12.5h1M7 12.5h1M10 12.5h1"/><path id="g738b" d="M1 2.5h9M5 3.5h1M5 4.5h1M5 5.5h1M5 6.5h1M2 7.5h7M5 8.5h1M5 9.5h1M5 10.5h1M5 11.5h1M0 12.5h11"/><path id="g73a9" d="M6 2.5h4M0 3.5h5M2 4.5h1M2 5.5h1M1 6.5h3M5 6.5h6M2 7.5h1M6 7.5h1M8 7.5h1M2 8.5h1M6 8.5h1M8 8.5h1M2 9.5h3M6 9.5h1M8 9.5h1M0 10.5h2M6 10.5h1M8 10.5h1M10 10.5h1M5 11.5h1M8 11.5h1M10 11.5h1M3 12.5h2M9 12.5h2"/><path id="g7406" d="M4 2.5h7M0 3.5h5M7 3.5h1M10 3.5h1M2 4.5h1M4 4.5h7M2 5.5h1M4 5.5h1M7 5.5h1M10 5.5h1M2 6.5h1M4 6.5h1M7 6.5h1M10 6.5h1M0 7.5h11M2 8.5h1M7 8.5h1M2 9.5h1M5 9.5h5M2 10.5h2M7 10.5h1M0 11.5h2M7 11.5h1M4 12.5h7"/><path id="g751f" d="M6 2.5h1M2 3.5h1M6 3.5h1M2 4.5h1M6 4.5h1M2 5.5h9M1 6.5h1M6 6.5h1M0 7.5h1M6 7.5h1M3 8.5h7M6 9.5h1M6 10.5h1M6 11.5h1M1 12.5h10"/><path id="g7528" d="M1 2.5h9M1 3.5h1M5 3.5h1M9 3.5h1M1 4.5h1M5 4.5h1M9 4.5h1M1 5.5h9M1 6.5h1M5 6.5h1M9 6.5h1M1 7.5h1M5 7.5h1M9 7.5h1M1 8.5h9M1 9.5h1M5 9.5h1M9 9.5h1M1 10.5h1M5 10.5h1M9 10.5h1M0 11.5h1M5 11.5h1M9 11.5h1M0 12.5h1M5 12.5h1M8 12.5h2"/><path id="g7535" d="M5 2.5h1M5 3.5h1M1 4.5h9M1 5.5h1M5 5.5h1M9 5.5h1M1 6.5h9M1 7.5h1M5 7.5h1M9 7.5h1M1 8.5h1M5 8.5h1M9 8.5h1M1 9.5h9M5 10.5h1M10 10.5h1M5 11.5h1M10 11.5h1M6 12.5h5"/><path id="g7537" d="M2 2.5h8M2 3.5h1M5 3.5h1M9 3.5h1M2 4.5h8M2 5.5h1M5 5.5h1M9 5.5h1M2 6.5h8M5 7.5h1M1 8.5h10M5 9.5h1M10 9.5h1M4 10.5h1M10 10.5h1M3 11.5h1M7 11.5h1M10 11.5h1M1 12.5h2M8 12.5h2"/><path id="g767d" d="M5 2.5h1M4 3.5h1M2 4.5h8M2 5.5h1M9 5.5h1M2 6.5h1M9 6.5h1M2 7.5h8M2 8.5h1M9 8.5h1M2 9.5h1M9 9.5h1M2 10.5h1M9 10.5h1M2 11.5h8M2 12.5h1M9 12.5h1"/><path id="g76d2" d="M5 2.5h1M4 3.5h1M6 3.5h1M3 4.5h5M2 5.5h1M8 5.5h1M0 6.5h2M3 6.5h5M9 6.5h2M3 7.5h1M7 7.5h1M3 8.5h5M1 10.5h9M1 11.5h1M4 11.5h1M6 11.5h1M9 11.5h1M0 12.5h11"/><path id="g76ee" d="M2 2.5h7M2 3.5h1M8 3.5h1M2 4.5h1M8 4.5h1M2 5.5h7M2 6.5h1M8 6.5h1M2 7.5h1M8 7.5h1M2 8.5h7M2 9.5h1M8 9.5h1M2 10.5h1M8 10.5h1M2 11.5h7M2 12.5h1M8 12.5h1"/><path id="g76f4" d="M5 2.5h1M0 3.5h11M5 4.5h1M2 5.5h7M2 6.5h1M8 6.5h1M2 7.5h7M2 8.5h1M8 8.5h1M2 9.5h7M2 10.5h1M8 10.5h1M2 11.5h1M8 11.5h1M0 12.5h11"/><path id="g76f8" d="M3 2.5h1M6 2.5h5M3 3.5h1M6 3.5h1M10 3.5h1M1 4.5h6M10 4.5h1M3 5.5h1M6 5.5h5M3 6.5h1M6 6.5h1M10 6.5h1M2 7.5h3M6 7.5h1M10 7.5h1M1 8.5h1M3 8.5h1M5 8.5h6M0 9.5h1M3 9.5h1M6 9.5h1M10 9.5h1M3 10.5h1M6 10.5h1M10 10.5h1M3 11.5h1M6 11.5h5M3 12.5h1M6 12.5h1M10 12.5h1"/><path id="g78e8" d="M6 2.5h1M1 3.5h10M1 4.5h1M4 4.5h1M8 4.5h1M1 5.5h10M1 6.5h1M3 6.5h3M7 6.5h3M1 7.5h2M4 7.5h1M6 7.5h1M8 7.5h1M10 7.5h1M1 8.5h10M1 9.5h1M5 9.5h1M1 10.5h1M3 10.5h7M1 11.5h2M4 11.5h1M9 11.5h1M0 12.5h1M4 12.5h6"/><path id="g793a" d="M1 3.5h9M0 6.5h11M5 7.5h1M2 8.5h1M5 8.5h1M8 8.5h1M2 9.5h1M5 9.5h1M9 9.5h1M1 10.5h1M5 10.5h1M10 10.5h1M0 11.5h1M5 11.5h1M10 11.5h1M4 12.5h2"/><path id="g79cd" d="M3 2.5h2M7 2.5h1M0 3.5h3M7 3.5h1M2 4.5h1M5 4.5h6M0 5.5h6M7 5.5h1M10 5.5h1M2 6.5h1M5 6.5h1M7 6.5h1M10 6.5h1M2 7.5h2M5 7.5h1M7 7.5h1M10 7.5h1M1 8.5h2M4 8.5h7M0 9.5h1M2 9.5h1M7 9.5h1M2 10.5h1M7 10.5h1M2 11.5h1M7 11.5h1M2 12.5h1M7 12.5h1"/><path id="g79d1" d="M3 2.5h2M9 2.5h1M0 3.5h3M6 3.5h1M9 3.5h1M2 4.5h1M7 4.5h1M9 4.5h1M0 5.5h5M9 5.5h1M2 6.5h1M6 6.5h1M9 6.5h1M2 7.5h2M7 7.5h1M9 7.5h1M1 8.5h2M4 8.5h1M9 8.5h2M0 9.5h1M2 9.5h1M7 9.5h3M2 10.5h1M5 10.5h2M9 10.5h1M2 11.5h1M9 11.5h1M2 12.5h1M9 12.5h1"/><path id="g79f0" d="M3 2.5h2M6 2.5h1M0 3.5h3M6 3.5h1M2 4.5h1M5 4.5h6M0 5.5h5M7 5.5h1M10 5.5h1M2 6.5h1M7 6.5h1M1 7.5h3M5 7.5h1M7 7.5h1M9 7.5h1M1 8.5h2M5 8.5h1M7 8.5h1M9 8.5h1M0 9.5h1M2 9.5h1M4 9.5h1M7 9.5h1M10 9.5h1M2 10.5h2M7 10.5h1M10 10.5h1M2 11.5h1M7 11.5h1M2 12.5h1M6 12.5h2"/><path id="g7a0b" d="M3 2.5h1M5 2.5h5M0 3.5h3M5 3.5h1M9 3.5h1M2 4.5h1M5 4.5h1M9 4.5h1M0 5.5h4M5 5.5h5M2 6.5h1M2 7.5h2M5 7.5h5M1 8.5h2M4 8.5h1M7 8.5h1M1 9.5h2M5 9.5h5M0 10.5h1M2 10.5h1M7 10.5h1M2 11.5h1M7 11.5h1M2 12.5h1M4 12.5h7"/><path id="g7a97" d="M6 2.5h1M1 3.5h10M1 4.5h1M3 4.5h1M8 4.5h1M10 4.5h1M2 5.5h1M5 5.5h1M9 5.5h1M1 6.5h10M2 7.5h1M5 7.5h1M9 7.5h1M2 8.5h1M4 8.5h6M2 9.5h3M7 9.5h1M9 9.5h1M2 10.5h1M5 10.5h2M9 10.5h1M2 11.5h1M4 11.5h1M7 11.5h1M9 11.5h1M2 12.5h8"/><path id="g7ba1" d="M2 2.5h1M7 2.5h1M2 3.5h4M7 3.5h4M1 4.5h1M3 4.5h1M6 4.5h1M8 4.5h1M0 5.5h11M0 6.5h1M10 6.5h1M2 7.5h7M2 8.5h1M8 8.5h1M2 9.5h8M2 10.5h1M9 10.5h1M2 11.5h1M9 11.5h1M2 12.5h8"/><path id="g7c7b" d="M2 2.5h1M5 2.5h1M8 2.5h1M3 3.5h1M5 3.5h1M7 3.5h1M0 4.5h11M3 5.5h1M5 5.5h1M7 5.5h1M2 6.5h1M5 6.5h1M8 6.5h1M1 7.5h1M9 7.5h1M5 8.5h1M0 9.5h11M4 10.5h1M6 10.5h1M3 11.5h1M7 11.5h1M0 12.5h3M8 12.5h3"/><path id="g7cca" d="M2 2.5h1M5 2.5h1M8 2.5h3M0 3.5h1M2 3.5h1M5 3.5h1M8 3.5h1M10 3.5h1M1 4.5h6M8 4.5h1M10 4.5h1M2 5.5h1M5 5.5h1M8 5.5h3M0 6.5h7M8 6.5h1M10 6.5h1M2 7.5h1M4 7.5h1M6 7.5h1M8 7.5h1M10 7.5h1M2 8.5h3M6 8.5h1M8 8.5h3M1 9.5h2M4 9.5h1M6 9.5h1M8 9.5h1M10 9.5h1M0 10.5h1M2 10.5h1M4 10.5h3M8 10.5h1M10 10.5h1M2 11.5h1M7 11.5h1M10 11.5h1M2 12.5h1M6 12.5h1M9 12.5h2"/><path id="g7cfb" d="M7 2.5h3M1 3.5h6M4 4.5h1M8 4.5h1M2 5.5h6M5 6.5h1M4 7.5h1M8 7.5h1M1 8.5h9M5 9.5h1M9 9.5h1M3 10.5h1M5 10.5h1M7 10.5h1M2 11.5h1M5 11.5h1M8 11.5h1M1 12.5h1M4 12.5h2M9 12.5h1"/><path id="g7d22" d="M5 2.5h1M1 3.5h9M5 4.5h1M0 5.5h11M0 6.5h1M3 6.5h1M7 6.5h1M10 6.5h1M2 7.5h5M4 8.5h1M8 8.5h1M1 9.5h9M5 10.5h1M9 10.5h1M2 11.5h1M5 11.5h1M8 11.5h1M0 12.5h2M4 12.5h2M9 12.5h2"/><path id="g7ea7" d="M2 2.5h1M4 2.5h6M2 3.5h1M6 3.5h1M9 3.5h1M1 4.5h1M4 4.5h1M6 4.5h1M9 4.5h1M1 5.5h1M3 5.5h1M6 5.5h1M8 5.5h1M0 6.5h3M6 6.5h1M8 6.5h3M2 7.5h1M6 7.5h1M10 7.5h1M1 8.5h1M6 8.5h1M10 8.5h1M0 9.5h4M5 9.5h1M7 9.5h1M9 9.5h1M4 10.5h2M8 10.5h1M2 11.5h2M5 11.5h1M7 11.5h1M9 11.5h1M0 12.5h2M4 12.5h1M6 12.5h1M10 12.5h1"/><path id="g7ebf" d="M2 2.5h1M6 2.5h1M8 2.5h1M2 3.5h1M6 3.5h1M9 3.5h1M1 4.5h1M6 4.5h4M1 5.5h1M4 5.5h3M0 6.5h3M6 6.5h5M2 7.5h1M4 7.5h3M1 8.5h1M6 8.5h1M9 8.5h1M0 9.5h4M6 9.5h1M8 9.5h1M4 10.5h1M7 10.5h1M10 10.5h1M2 11.5h2M6 11.5h1M8 11.5h1M10 11.5h1M0 12.5h2M4 12.5h2M9 12.5h2"/><path id="g7ec4" d="M2 2.5h1M2 3.5h1M5 3.5h5M1 4.5h1M5 4.5h1M9 4.5h1M1 5.5h1M3 5.5h1M5 5.5h1M9 5.5h1M0 6.5h3M5 6.5h5M2 7.5h1M5 7.5h1M9 7.5h1M1 8.5h1M5 8.5h1M9 8.5h1M0 9.5h4M5 9.5h5M5 10.5h1M9 10.5h1M2 11.5h2M5 11.5h1M9 11.5h1M0 12.5h2M4 12.5h7"/><path id="g7ec7" d="M2 2.5h1M5 2.5h5M2 3.5h1M5 3.5h1M9 3.5h1M1 4.5h1M4 4.5h2M9 4.5h1M1 5.5h1M3 5.5h1M5 5.5h1M9 5.5h1M0 6.5h3M5 6.5h1M9 6.5h1M2 7.5h1M5 7.5h5M1 8.5h1M0 9.5h4M6 9.5h1M8 9.5h1M6 10.5h1M9 10.5h1M2 11.5h2M5 11.5h1M10 11.5h1M0 12.5h2M4 12.5h1M10 12.5h1"/><path id="g7ecf" d="M2 2.5h1M5 2.5h5M2 3.5h1M8 3.5h1M1 4.5h1M4 4.5h1M7 4.5h1M1 5.5h1M3 5.5h1M6 5.5h1M8 5.5h1M0 6.5h3M5 6.5h1M9 6.5h1M2 7.5h1M4 7.5h1M10 7.5h1M1 8.5h1M5 8.5h5M0 9.5h4M7 9.5h1M7 10.5h1M2 11.5h2M7 11.5h1M0 12.5h2M4 12.5h7"/><path id="g7ed3" d="M2 2.5h1M7 2.5h1M2 3.5h1M7 3.5h1M1 4.5h1M4 4.5h7M1 5.5h1M3 5.5h1M7 5.5h1M0 6.5h3M5 6.5h5M2 7.5h1M1 8.5h1M5 8.5h5M0 9.5h4M5 9.5h1M9 9.5h1M4 10.5h2M9 10.5h1M2 11.5h2M5 11.5h5M0 12.5h2M5 12.5h1M9 12.5h1"/><path id="g7edf" d="M2 2.5h1M7 2.5h1M2 3.5h1M4 3.5h7M1 4.5h1M6 4.5h1M1 5.5h1M3 5.5h1M5 5.5h1M9 5.5h1M0 6.5h3M4 6.5h7M2 7.5h1M6 7.5h1M8 7.5h1M10 7.5h1M1 8.5h1M6 8.5h1M8 8.5h1M0 9.5h4M6 9.5h1M8 9.5h1M6 10.5h1M8 10.5h1M10 10.5h1M2 11.5h2M5 11.5h1M8 11.5h1M10 11.5h1M0 12.5h2M4 12.5h1M8 12.5h3"/><path id="g7ee9" d="M2 2.5h1M7 2.5h1M2 3.5h1M4 3.5h7M1 4.5h1M4 4.5h1M7 4.5h1M1 5.5h1M3 5.5h1M5 5.5h5M0 6.5h3M7 6.5h1M2 7.5h1M4 7.5h7M1 8.5h1M5 8.5h1M9 8.5h1M0 9.5h4M5 9.5h1M7 9.5h1M9 9.5h1M4 10.5h2M7 10.5h1M9 10.5h1M2 11.5h2M6 11.5h1M8 11.5h1M0 12.5h2M4 12.5h2M9 12.5h2"/><path id="g7efc" d="M2 2.5h1M7 2.5h1M2 3.5h1M4 3.5h7M1 4.5h1M4 4.5h1M10 4.5h1M1 5.5h1M3 5.5h1M5 5.5h5M0 6.5h3M2 7.5h1M5 7.5h6M1 8.5h1M7 8.5h1M0 9.5h4M5 9.5h1M7 9.5h1M9 9.5h1M5 10.5h1M7 10.5h1M9 10.5h1M2 11.5h3M7 11.5h1M10 11.5h1M0 12.5h2M6 12.5h2M10 12.5h1"/><path id="g7f16" d="M2 2.5h1M7 2.5h1M2 3.5h1M4 3.5h7M1 4.5h1M4 4.5h1M10 4.5h1M1 5.5h1M3 5.5h8M0 6.5h3M4 6.5h1M2 7.5h1M4 7.5h7M1 8.5h1M4 8.5h1M6 8.5h1M8 8.5h1M10 8.5h1M0 9.5h11M4 10.5h1M6 10.5h1M8 10.5h1M10 10.5h1M2 11.5h3M6 11.5h1M8 11.5h1M10 11.5h1M0 12.5h2M4 12.5h1M9 12.5h2"/><path id="g7f6e" d="M1 2.5h9M1 3.5h1M4 3.5h1M6 3.5h1M9 3.5h1M1 4.5h9M5 5.5h1M0 6.5h11M2 7.5h1M8 7.5h1M2 8.5h7M2 9.5h1M8 9.5h1M2 10.5h7M2 11.5h1M8 11.5h1M0 12.5h11"/><path id="g7fa4" d="M1 2.5h4M6 2.5h1M10 2.5h1M2 3.5h1M4 3.5h1M7 3.5h1M9 3.5h1M0 4.5h11M2 5.5h1M4 5.5h1M8 5.5h1M1 6.5h4M6 6.5h5M2 7.5h1M8 7.5h1M1 8.5h4M8 8.5h1M0 9.5h1M2 9.5h1M4 9.5h7M2 10.5h1M4 10.5h1M8 10.5h1M2 11.5h1M4 11.5h1M8 11.5h1M2 12.5h3M8 12.5h1"/><path id="g8000" d="M2 2.5h1M5 2.5h6M2 3.5h1M7 3.5h1M10 3.5h1M0 4.5h1M2 4.5h1M4 4.5h2M7 4.5h2M10 4.5h1M1 5.5h3M6 5.5h2M9 5.5h2M2 6.5h1M5 6.5h6M0 7.5h6M8 7.5h1M1 8.5h1M3 8.5h1M5 8.5h6M1 9.5h1M3 9.5h1M5 9.5h1M8 9.5h1M1 10.5h1M3 10.5h1M5 10.5h6M0 11.5h1M3 11.5h3M8 11.5h1M0 12.5h1M3 12.5h1M5 12.5h6"/><path id="g8003" d="M4 2.5h1M9 2.5h1M1 3.5h8M4 4.5h1M7 4.5h1M0 5.5h11M5 6.5h1M4 7.5h6M2 8.5h2M5 8.5h1M0 9.5h2M4 9.5h5M8 10.5h1M8 11.5h1M5 12.5h3"/><path id="g804c" d="M0 2.5h11M1 3.5h1M4 3.5h1M6 3.5h1M10 3.5h1M1 4.5h1M4 4.5h1M6 4.5h1M10 4.5h1M1 5.5h4M6 5.5h1M10 5.5h1M1 6.5h1M4 6.5h1M6 6.5h1M10 6.5h1M1 7.5h4M6 7.5h5M1 8.5h1M4 8.5h1M1 9.5h1M4 9.5h2M7 9.5h1M9 9.5h1M0 10.5h5M7 10.5h1M9 10.5h1M4 11.5h1M6 11.5h1M10 11.5h1M4 12.5h2M10 12.5h1"/><path id="g80fd" d="M2 2.5h1M7 2.5h1M1 3.5h1M4 3.5h1M7 3.5h1M9 3.5h1M0 4.5h6M7 4.5h2M7 5.5h1M10 5.5h1M1 6.5h5M7 6.5h4M1 7.5h1M5 7.5h1M1 8.5h5M7 8.5h1M9 8.5h1M1 9.5h1M5 9.5h1M7 9.5h2M1 10.5h5M7 10.5h1M10 10.5h1M1 11.5h1M5 11.5h1M7 11.5h1M10 11.5h1M1 12.5h1M4 12.5h2M7 12.5h4"/><path id="g8425" d="M4 2.5h1M7 2.5h1M1 3.5h10M4 4.5h1M7 4.5h1M1 5.5h10M1 6.5h1M10 6.5h1M1 7.5h1M3 7.5h6M3 8.5h1M8 8.5h1M2 9.5h8M2 10.5h1M9 10.5h1M2 11.5h1M9 11.5h1M2 12.5h8"/><path id="g8ba1" d="M1 2.5h1M7 2.5h1M2 3.5h1M7 3.5h1M7 4.5h1M4 5.5h7M0 6.5h3M7 6.5h1M2 7.5h1M7 7.5h1M2 8.5h1M7 8.5h1M2 9.5h1M4 9.5h1M7 9.5h1M2 10.5h2M7 10.5h1M2 11.5h1M7 11.5h1M7 12.5h1"/><path id="g8ba2" d="M1 2.5h1M2 3.5h1M4 3.5h7M8 4.5h1M8 5.5h1M0 6.5h3M8 6.5h1M2 7.5h1M8 7.5h1M2 8.5h1M8 8.5h1M2 9.5h1M8 9.5h1M2 10.5h1M4 10.5h1M8 10.5h1M2 11.5h2M8 11.5h1M2 12.5h1M6 12.5h3"/><path id="g8bdd" d="M1 2.5h1M8 2.5h2M2 3.5h1M5 3.5h3M7 4.5h1M0 5.5h3M4 5.5h7M2 6.5h1M7 6.5h1M2 7.5h1M7 7.5h1M2 8.5h1M5 8.5h5M2 9.5h1M5 9.5h1M9 9.5h1M2 10.5h2M5 10.5h1M9 10.5h1M2 11.5h1M5 11.5h5M5 12.5h1M9 12.5h1"/><path id="g8be2" d="M1 2.5h1M5 2.5h1M2 3.5h1M5 3.5h6M4 4.5h1M10 4.5h1M0 5.5h4M5 5.5h4M10 5.5h1M2 6.5h1M5 6.5h1M8 6.5h1M10 6.5h1M2 7.5h1M5 7.5h4M10 7.5h1M2 8.5h1M5 8.5h1M8 8.5h1M10 8.5h1M2 9.5h1M5 9.5h1M8 9.5h1M10 9.5h1M2 10.5h2M5 10.5h4M10 10.5h1M2 11.5h1M10 11.5h1M8 12.5h2"/><path id="g8c8c" d="M2 2.5h2M7 2.5h1M0 3.5h2M3 3.5h1M5 3.5h6M1 4.5h1M3 4.5h3M10 4.5h1M1 5.5h2M5 5.5h6M0 6.5h2M3 6.5h1M5 6.5h1M10 6.5h1M2 7.5h1M4 7.5h7M1 8.5h1M3 8.5h2M6 8.5h1M8 8.5h1M0 9.5h1M2 9.5h1M4 9.5h1M6 9.5h1M8 9.5h1M1 10.5h1M4 10.5h1M6 10.5h1M8 10.5h1M0 11.5h1M2 11.5h1M4 11.5h1M6 11.5h1M8 11.5h1M10 11.5h1M3 12.5h1M5 12.5h1M9 12.5h2"/><path id="g8d22" d="M0 2.5h5M8 2.5h1M0 3.5h1M4 3.5h1M8 3.5h1M0 4.5h1M2 4.5h1M4 4.5h7M0 5.5h1M2 5.5h1M4 5.5h1M8 5.5h1M0 6.5h1M2 6.5h1M4 6.5h1M7 6.5h2M0 7.5h1M2 7.5h1M4 7.5h1M7 7.5h2M0 8.5h1M2 8.5h1M4 8.5h1M6 8.5h1M8 8.5h1M2 9.5h1M6 9.5h1M8 9.5h1M1 10.5h1M3 10.5h1M5 10.5h1M8 10.5h1M1 11.5h1M4 11.5h1M8 11.5h1M0 12.5h1M7 12.5h2"/><path id="g8d2d" d="M0 2.5h5M6 2.5h1M0 3.5h1M4 3.5h1M6 3.5h1M0 4.5h1M2 4.5h1M4 4.5h1M6 4.5h5M0 5.5h1M2 5.5h1M4 5.5h2M10 5.5h1M0 6.5h1M2 6.5h1M4 6.5h1M7 6.5h1M10 6.5h1M0 7.5h1M2 7.5h1M4 7.5h1M6 7.5h1M10 7.5h1M0 8.5h1M2 8.5h1M4 8.5h1M6 8.5h1M8 8.5h1M10 8.5h1M2 9.5h1M5 9.5h3M9 9.5h2M1 10.5h1M3 10.5h1M10 10.5h1M1 11.5h1M4 11.5h1M10 11.5h1M0 12.5h1M4 12.5h1M8 12.5h2"/><path id="g8d44" d="M1 2.5h1M4 2.5h1M2 3.5h1M4 3.5h7M0 4.5h2M3 4.5h1M6 4.5h1M9 4.5h1M1 5.5h1M5 5.5h1M7 5.5h1M1 6.5h1M4 6.5h1M8 6.5h2M2 7.5h7M2 8.5h1M8 8.5h1M2 9.5h1M5 9.5h1M8 9.5h1M2 10.5h1M5 10.5h1M8 10.5h1M4 11.5h1M6 11.5h1M1 12.5h3M7 12.5h3"/><path id="g8d75" d="M3 2.5h1M3 3.5h1M6 3.5h1M9 3.5h1M1 4.5h5M7 4.5h1M9 4.5h1M3 5.5h1M8 5.5h1M0 6.5h7M8 6.5h1M3 7.5h1M8 7.5h1M1 8.5h1M3 8.5h3M7 8.5h1M9 8.5h1M1 9.5h1M3 9.5h1M7 9.5h1M9 9.5h1M1 10.5h3M6 10.5h1M9 10.5h1M0 11.5h1M3 11.5h2M0 12.5h1M5 12.5h6"/><path id="g8f6f" d="M1 2.5h1M6 2.5h1M1 3.5h1M6 3.5h1M0 4.5h5M6 4.5h5M1 5.5h1M6 5.5h1M10 5.5h1M0 6.5h1M2 6.5h1M5 6.5h1M7 6.5h1M9 6.5h1M0 7.5h5M7 7.5h1M2 8.5h1M7 8.5h1M2 9.5h3M6 9.5h1M8 9.5h1M0 10.5h3M6 10.5h1M8 10.5h1M2 11.5h1M5 11.5h1M9 11.5h1M2 12.5h1M4 12.5h1M10 12.5h1"/><path id="g8fd4" d="M1 2.5h1M9 2.5h2M2 3.5h1M5 3.5h4M2 4.5h1M5 4.5h1M5 5.5h6M0 6.5h3M5 6.5h2M10 6.5h1M2 7.5h1M5 7.5h1M7 7.5h1M9 7.5h1M2 8.5h1M5 8.5h1M8 8.5h1M2 9.5h1M4 9.5h1M7 9.5h1M9 9.5h1M2 10.5h1M5 10.5h2M10 10.5h1M1 11.5h1M3 11.5h1M0 12.5h1M4 12.5h7"/><path id="g9009" d="M1 2.5h1M5 2.5h1M7 2.5h1M2 3.5h1M5 3.5h1M7 3.5h1M2 4.5h1M5 4.5h5M4 5.5h1M7 5.5h1M0 6.5h3M4 6.5h7M2 7.5h1M6 7.5h1M8 7.5h1M2 8.5h1M6 8.5h1M8 8.5h1M10 8.5h1M2 9.5h1M5 9.5h1M8 9.5h1M10 9.5h1M2 10.5h1M4 10.5h1M9 10.5h2M1 11.5h1M3 11.5h1M0 12.5h1M4 12.5h7"/><path id="g90e8" d="M3 2.5h1M7 2.5h4M0 3.5h8M10 3.5h1M1 4.5h1M5 4.5h1M7 4.5h1M10 4.5h1M2 5.5h1M4 5.5h1M7 5.5h1M9 5.5h1M0 6.5h9M7 7.5h1M9 7.5h1M1 8.5h5M7 8.5h1M10 8.5h1M1 9.5h1M5 9.5h1M7 9.5h1M10 9.5h1M1 10.5h1M5 10.5h1M7 10.5h2M10 10.5h1M1 11.5h5M7 11.5h1M9 11.5h1M1 12.5h1M5 12.5h1M7 12.5h1"/><path id="g914d" d="M0 2.5h5M6 2.5h5M1 3.5h1M3 3.5h1M10 3.5h1M1 4.5h1M3 4.5h1M10 4.5h1M0 5.5h5M10 5.5h1M0 6.5h1M2 6.5h1M4 6.5h1M6 6.5h5M0 7.5h2M3 7.5h2M6 7.5h1M0 8.5h1M4 8.5h1M6 8.5h1M0 9.5h5M6 9.5h1M0 10.5h1M4 10.5h1M6 10.5h1M10 10.5h1M0 11.5h5M6 11.5h1M10 11.5h1M0 12.5h1M4 12.5h1M6 12.5h5"/><path id="g91c7" d="M5 2.5h4M1 3.5h4M9 3.5h1M2 4.5h1M5 4.5h1M8 4.5h1M3 5.5h1M7 5.5h1M5 6.5h1M0 7.5h11M4 8.5h3M3 9.5h1M5 9.5h1M7 9.5h1M2 10.5h1M5 10.5h1M8 10.5h1M1 11.5h1M5 11.5h1M9 11.5h2M0 12.5h1M5 12.5h1M10 12.5h1"/><path id="g91cf" d="M2 2.5h7M2 3.5h1M8 3.5h1M2 4.5h7M2 5.5h1M8 5.5h1M0 6.5h11M2 7.5h1M5 7.5h1M8 7.5h1M2 8.5h7M2 9.5h1M5 9.5h1M8 9.5h1M1 10.5h9M5 11.5h1M0 12.5h11"/><path id="g91d1" d="M5 2.5h1M4 3.5h1M6 3.5h1M3 4.5h1M7 4.5h1M2 5.5h1M8 5.5h1M0 6.5h2M3 6.5h5M9 6.5h2M5 7.5h1M1 8.5h9M5 9.5h1M2 10.5h1M5 10.5h1M8 10.5h1M3 11.5h1M5 11.5h1M7 11.5h1M0 12.5h11"/><path id="g9500" d="M1 2.5h1M7 2.5h1M1 3.5h1M5 3.5h1M7 3.5h1M10 3.5h1M1 4.5h4M6 4.5h2M9 4.5h1M0 5.5h1M5 5.5h6M0 6.5h6M10 6.5h1M2 7.5h1M5 7.5h6M0 8.5h6M10 8.5h1M2 9.5h1M5 9.5h6M2 10.5h1M4 10.5h2M10 10.5h1M2 11.5h2M5 11.5h1M10 11.5h1M2 12.5h1M5 12.5h1M8 12.5h3"/><path id="g95e8" d="M2 2.5h1M5 2.5h6M3 3.5h1M10 3.5h1M1 4.5h1M10 4.5h1M1 5.5h1M10 5.5h1M1 6.5h1M10 6.5h1M1 7.5h1M10 7.5h1M1 8.5h1M10 8.5h1M1 9.5h1M10 9.5h1M1 10.5h1M10 10.5h1M1 11.5h1M10 11.5h1M1 12.5h1M8 12.5h3"/><path id="g9650" d="M0 2.5h4M5 2.5h5M0 3.5h1M3 3.5h1M5 3.5h1M9 3.5h1M0 4.5h1M2 4.5h1M5 4.5h5M0 5.5h2M5 5.5h1M9 5.5h1M0 6.5h1M2 6.5h1M5 6.5h5M0 7.5h1M3 7.5h1M5 7.5h1M7 7.5h1M0 8.5h1M3 8.5h1M5 8.5h1M7 8.5h1M10 8.5h1M0 9.5h2M3 9.5h1M5 9.5h1M7 9.5h1M9 9.5h1M0 10.5h1M2 10.5h1M5 10.5h1M8 10.5h1M0 11.5h1M5 11.5h1M7 11.5h1M9 11.5h1M0 12.5h1M5 12.5h2M10 12.5h1"/><path id="g9664" d="M0 2.5h4M7 2.5h1M0 3.5h1M3 3.5h1M6 3.5h1M8 3.5h1M0 4.5h1M2 4.5h1M5 4.5h1M9 4.5h1M0 5.5h2M4 5.5h1M6 5.5h3M10 5.5h1M0 6.5h1M2 6.5h1M7 6.5h1M0 7.5h1M3 7.5h8M0 8.5h1M3 8.5h1M7 8.5h1M0 9.5h3M5 9.5h1M7 9.5h1M9 9.5h1M0 10.5h1M4 10.5h1M7 10.5h1M10 10.5h1M0 11.5h1M3 11.5h1M7 11.5h1M10 11.5h1M0 12.5h1M6 12.5h2"/><path id="g96f6" d="M1 2.5h9M5 3.5h1M0 4.5h11M0 5.5h1M3 5.5h1M5 5.5h1M7 5.5h1M10 5.5h1M4 6.5h3M2 7.5h2M7 7.5h2M0 8.5h2M5 8.5h1M9 8.5h2M2 9.5h7M7 10.5h1M4 11.5h3M6 12.5h2"/><path id="g9762" d="M1 2.5h10M5 3.5h1M4 4.5h1M1 5.5h10M1 6.5h1M4 6.5h1M7 6.5h1M10 6.5h1M1 7.5h1M4 7.5h4M10 7.5h1M1 8.5h1M4 8.5h1M7 8.5h1M10 8.5h1M1 9.5h1M4 9.5h4M10 9.5h1M1 10.5h1M4 10.5h1M7 10.5h1M10 10.5h1M1 11.5h10M1 12.5h1M10 12.5h1"/><path id="g9879" d="M5 2.5h6M0 3.5h5M7 3.5h1M2 4.5h1M5 4.5h6M2 5.5h1M5 5.5h1M10 5.5h1M2 6.5h1M5 6.5h1M7 6.5h1M10 6.5h1M2 7.5h1M5 7.5h1M7 7.5h1M10 7.5h1M2 8.5h1M5 8.5h1M7 8.5h1M10 8.5h1M2 9.5h4M7 9.5h1M10 9.5h1M0 10.5h2M7 10.5h2M6 11.5h1M9 11.5h1M4 12.5h2M10 12.5h1"/><path id="g989d" d="M2 2.5h1M6 2.5h5M0 3.5h6M8 3.5h1M0 4.5h1M5 4.5h6M1 5.5h4M6 5.5h1M10 5.5h1M0 6.5h2M4 6.5h1M6 6.5h1M8 6.5h1M10 6.5h1M2 7.5h2M6 7.5h1M8 7.5h1M10 7.5h1M1 8.5h1M4 8.5h1M6 8.5h1M8 8.5h1M10 8.5h1M0 9.5h7M8 9.5h1M10 9.5h1M1 10.5h1M4 10.5h1M6 10.5h1M8 10.5h1M10 10.5h1M1 11.5h4M7 11.5h1M9 11.5h1M1 12.5h1M4 12.5h3M10 12.5h1"/><path id="g9a6c" d="M1 2.5h8M8 3.5h1M3 4.5h1M8 4.5h1M3 5.5h1M7 5.5h1M2 6.5h1M7 6.5h1M2 7.5h9M10 8.5h1M10 9.5h1M0 10.5h8M10 10.5h1M10 11.5h1M8 12.5h2"/><path id="g9ad8" d="M5 2.5h1M0 3.5h11M3 5.5h5M3 6.5h1M7 6.5h1M1 7.5h9M1 8.5h1M9 8.5h1M1 9.5h1M3 9.5h5M9 9.5h1M1 10.5h1M3 10.5h1M7 10.5h1M9 10.5h1M1 11.5h1M3 11.5h5M9 11.5h1M1 12.5h1M8 12.5h2"/><path id="g9ec4" d="M3 2.5h1M7 2.5h1M1 3.5h9M3 4.5h1M7 4.5h1M0 5.5h11M5 6.5h1M2 7.5h7M2 8.5h1M5 8.5h1M8 8.5h1M2 9.5h7M2 10.5h1M5 10.5h1M8 10.5h1M2 11.5h7M1 12.5h2M8 12.5h2"/></defs></svg>
<div style="left:0px;top:0px;width:960px;height:727px;border:1px solid #000;border-radius:6px 6px 0 0"></div>
<div style="left:958px;top:3px;width:1px;height:723px;background:#1a8088"></div>
<div style="left:1px;top:724px;width:958px;height:1px;background:#5cb6be"></div>
<div style="left:1px;top:725px;width:958px;height:1px;background:#1f8088"></div>
<div style="left:1px;top:1px;width:957px;height:1px;background:#fff"></div>
<div style="left:1px;top:2px;width:953px;height:22px;background:linear-gradient(108deg,rgba(255,255,255,0) 0,rgba(255,255,255,0) 43%,rgba(255,255,255,.3) 47%,rgba(255,255,255,.15) 50%,rgba(255,255,255,0) 50.500%,rgba(255,255,255,0) 67%,rgba(255,255,255,.5) 71%,rgba(255,255,255,.25) 74%,rgba(255,255,255,0) 74.500%),linear-gradient(90deg,#f3f3f5 0,#ececee 15%,#dedee0 35%,#d4d4d4 52%,#d3d3d3 100%)"></div>
<div style="left:954px;top:2px;width:4px;height:722px;background:#f6f4fa"></div>
<svg style="left:5px;top:3px" width="20" height="18" viewBox="0 0 20 18" shape-rendering="crispEdges"><path d="M5 0l4 4-4 4-4-4z" fill="#f0e020" stroke="#404000" stroke-width=".8"/><path d="M16 3l3 3-3 3-3-3z" fill="#902050" stroke="#401030" stroke-width=".6"/><path d="M15 12l3 3-3 3-3-3z" fill="#30a0a8" stroke="#104850" stroke-width=".6"/><path d="M9 6h4M11 6v7h2" fill="none" stroke="#809070"/></svg>
<div class="tb" style="left:24px;top:8px;"><svg class="p" width="78" height="14" viewBox="0 0 78 14"><title>企业应用平台</title><g stroke="currentColor" transform="translate(0,-1)"><use href="#g4f01" x="0"/><use href="#g4f01" x="1"/><use href="#g4e1a" x="13"/><use href="#g4e1a" x="14"/><use href="#g5e94" x="26"/><use href="#g5e94" x="27"/><use href="#g7528" x="39"/><use href="#g7528" x="40"/><use href="#g5e73" x="52"/><use href="#g5e73" x="53"/><use href="#g53f0" x="65"/><use href="#g53f0" x="66"/></g></svg></div>
<div class="tb" style="left:107px;top:8px;letter-spacing:1.500px;font-size:13px">2008</div>
<div class="tb" style="left:147px;top:8px;"><svg class="p" width="39" height="14" viewBox="0 0 39 14"><title>服务器</title><g stroke="currentColor" transform="translate(0,-1)"><use href="#g670d" x="0"/><use href="#g670d" x="1"/><use href="#g52a1" x="13"/><use href="#g52a1" x="14"/><use href="#g5668" x="26"/><use href="#g5668" x="27"/></g></svg></div>
<div class="tb" style="left:190px;top:8px;"><svg class="p" width="52" height="14" viewBox="0 0 52 14"><title>本地服务</title><g stroke="currentColor" transform="translate(0,-1)"><use href="#g672c" x="0"/><use href="#g672c" x="1"/><use href="#g5730" x="13"/><use href="#g5730" x="14"/><use href="#g670d" x="26"/><use href="#g670d" x="27"/><use href="#g52a1" x="39"/><use href="#g52a1" x="40"/></g></svg></div>
<div class="tb" style="left:243px;top:8px;letter-spacing:2px;font-size:13px">-U:\</div>
<div class="tb" style="left:272px;top:8px;"><svg class="p" width="104" height="14" viewBox="0 0 104 14"><title>公司管理资料大全</title><g stroke="currentColor" transform="translate(0,-1)"><use href="#g516c" x="0"/><use href="#g516c" x="1"/><use href="#g53f8" x="13"/><use href="#g53f8" x="14"/><use href="#g7ba1" x="26"/><use href="#g7ba1" x="27"/><use href="#g7406" x="39"/><use href="#g7406" x="40"/><use href="#g8d44" x="52"/><use href="#g8d44" x="53"/><use href="#g6599" x="65"/><use href="#g6599" x="66"/><use href="#g5927" x="78"/><use href="#g5927" x="79"/><use href="#g5168" x="91"/><use href="#g5168" x="92"/></g></svg></div>
<div class="tb" style="left:377px;top:8px;font-size:13px">\</div>
<div class="tb" style="left:384px;top:8px;font-size:13px"><svg class="p" width="13" height="14" viewBox="0 0 13 14"><title>★</title><g stroke="currentColor" transform="translate(0,-1)"><use href="#g2605" x="0"/><use href="#g2605" x="1"/></g></svg></div>
<div class="tb" style="left:397px;top:8px;letter-spacing:1.300px;font-size:13px">0424</div>
<div class="tb" style="left:431px;top:8px;"><svg class="p" width="52" height="14" viewBox="0 0 52 14"><title>人力资源</title><g stroke="currentColor" transform="translate(0,-1)"><use href="#g4eba" x="0"/><use href="#g4eba" x="1"/><use href="#g529b" x="13"/><use href="#g529b" x="14"/><use href="#g8d44" x="26"/><use href="#g8d44" x="27"/><use href="#g6e90" x="39"/><use href="#g6e90" x="40"/></g></svg></div>
<div class="tb" style="left:484px;top:8px;letter-spacing:1.400px;font-size:13px">1.6\db\</div>
<div class="tb" style="left:538px;top:8px;"><svg class="p" width="39" height="14" viewBox="0 0 39 14"><title>演示库</title><g stroke="currentColor" transform="translate(0,-1)"><use href="#g6f14" x="0"/><use href="#g6f14" x="1"/><use href="#g793a" x="13"/><use href="#g793a" x="14"/><use href="#g5e93" x="26"/><use href="#g5e93" x="27"/></g></svg></div>
<div class="tb" style="left:578px;top:8px;letter-spacing:.6px;font-size:13px">.mdb</div>
<div style="left:859px;top:1px;width:94px;height:17px;border:1px solid #303438;border-top:0;border-radius:0 0 5px 5px;background:linear-gradient(#f2f2f2,#e6e6e8 48%,#bcc0c4 52%,#cccccc);overflow:hidden"><div style="left:51px;top:0;width:42px;height:17px;background:linear-gradient(#f0b8aa,#e6907c 46%,#cf452a 52%,#d65a3a 80%,#e28a62)"></div><div style="left:24px;top:0;width:1px;height:17px;background:#383c40"></div><div style="left:50px;top:0;width:1px;height:17px;background:#402020"></div><div style="left:6px;top:9px;width:12px;height:4px;border:1px solid #3c4450;background:#fff;border-radius:1px"></div><div style="left:31px;top:3px;width:12px;height:10px;border:1px solid #3c4450;background:#f4f4f4"></div><div style="left:34px;top:6px;width:6px;height:4px;border:1px solid #3c4450;background:#c8ccd0"></div><svg style="left:66px;top:3px" width="11" height="10" viewBox="0 0 11 10"><path d="M2 1.500l7 7M9 1.500l-7 7" stroke="#5a2a24" stroke-width="4.400" stroke-linecap="square"/><path d="M2 1.500l7 7M9 1.500l-7 7" stroke="#fff" stroke-width="2.400" stroke-linecap="square"/></svg></div>
<div style="left:1px;top:24px;width:957px;height:20px;background:linear-gradient(#f5f5f5,#f6f5f6 70%,#f8eef4 85%,#eef6f2)"></div>
<div class="t" style="left:10px;top:26px;"><svg class="p" width="57" height="14" viewBox="0 0 57 14"><title>系统功能 F</title><g stroke="currentColor" transform="translate(0,-1)"><use href="#g7cfb" x="0"/><use href="#g7edf" x="12"/><use href="#g529f" x="24"/><use href="#g80fd" x="36"/><use href="#g46" x="51"/><path d="M51 13.5h6"/></g></svg></div>
<div class="t" style="left:79px;top:26px;"><svg class="p" width="24" height="14" viewBox="0 0 24 14"><title>窗口</title><g stroke="currentColor" transform="translate(0,-1)"><use href="#g7a97" x="0"/><use href="#g53e3" x="12"/></g></svg></div>
<div class="t" style="left:115px;top:26px;"><svg class="p" width="48" height="14" viewBox="0 0 48 14"><title>人事资料</title><g stroke="currentColor" transform="translate(0,-1)"><use href="#g4eba" x="0"/><use href="#g4e8b" x="12"/><use href="#g8d44" x="24"/><use href="#g6599" x="36"/></g></svg></div>
<div class="t" style="left:175px;top:26px;"><svg class="p" width="48" height="14" viewBox="0 0 48 14"><title>人力资源</title><g stroke="currentColor" transform="translate(0,-1)"><use href="#g4eba" x="0"/><use href="#g529b" x="12"/><use href="#g8d44" x="24"/><use href="#g6e90" x="36"/></g></svg></div>
<div class="t" style="left:235px;top:26px;"><svg class="p" width="48" height="14" viewBox="0 0 48 14"><title>工资管理</title><g stroke="currentColor" transform="translate(0,-1)"><use href="#g5de5" x="0"/><use href="#g8d44" x="12"/><use href="#g7ba1" x="24"/><use href="#g7406" x="36"/></g></svg></div>
<div class="t" style="left:295px;top:26px;"><svg class="p" width="48" height="14" viewBox="0 0 48 14"><title>考勤管理</title><g stroke="currentColor" transform="translate(0,-1)"><use href="#g8003" x="0"/><use href="#g52e4" x="12"/><use href="#g7ba1" x="24"/><use href="#g7406" x="36"/></g></svg></div>
<div class="t" style="left:355px;top:26px;"><svg class="p" width="48" height="14" viewBox="0 0 48 14"><title>绩效考核</title><g stroke="currentColor" transform="translate(0,-1)"><use href="#g7ee9" x="0"/><use href="#g6548" x="12"/><use href="#g8003" x="24"/><use href="#g6838" x="36"/></g></svg></div>
<div class="t" style="left:415px;top:26px;"><svg class="p" width="48" height="14" viewBox="0 0 48 14"><title>配置管理</title><g stroke="currentColor" transform="translate(0,-1)"><use href="#g914d" x="0"/><use href="#g7f6e" x="12"/><use href="#g7ba1" x="24"/><use href="#g7406" x="36"/></g></svg></div>
<div style="left:4px;top:44px;width:952px;height:1px;background:#5a5a62"></div>
<svg style="left:5px;top:45px" width="949" height="652" viewBox="0 0 949 652"><defs><linearGradient id="wl" x1="0" y1="0" x2="0" y2="1"><stop offset="0" stop-color="#73a5ea"/><stop offset=".41" stop-color="#6ba4ee"/><stop offset=".6" stop-color="#5c97ea"/><stop offset=".77" stop-color="#4a87df"/><stop offset="1" stop-color="#4174cf"/></linearGradient><linearGradient id="wt" x1="0" y1="0" x2="1" y2="0"><stop offset="0" stop-color="#72a5ea"/><stop offset=".04" stop-color="#6aa2ea"/><stop offset=".08" stop-color="#78aeef"/><stop offset=".25" stop-color="#92cbf9"/><stop offset=".32" stop-color="#9ad4fc"/><stop offset=".6" stop-color="#a6defe"/><stop offset="1" stop-color="#a9e1ff"/></linearGradient><linearGradient id="wr" x1="0" y1="0" x2="0" y2="1"><stop offset="0" stop-color="#a9e1ff"/><stop offset=".06" stop-color="#a8e0fe"/><stop offset=".4" stop-color="#96d4fc"/><stop offset=".55" stop-color="#8ac7fb"/><stop offset=".7" stop-color="#7abcf9"/><stop offset="1" stop-color="#74b6f6"/></linearGradient><linearGradient id="wb" x1="0" y1="0" x2="0" y2="1"><stop offset="0" stop-color="#66a6ec"/><stop offset="1" stop-color="#528de1"/></linearGradient></defs><rect width="949" height="652" fill="url(#wl)"/><rect width="949" height="18" fill="url(#wt)"/><rect x="820" width="129" height="652" fill="url(#wr)"/><polygon points="820,496 949,410.700 949,652 820,652" fill="url(#wb)"/><polygon points="820,582.600 949,545 949,652 820,652" fill="#477ed4"/><path d="M820 496L949 410.700" stroke="#a6dcff" stroke-width="1.500" fill="none" opacity=".8"/><path d="M820 582.600L949 545" stroke="#78a8ee" stroke-width="1.500" fill="none" opacity=".8"/><text transform="translate(846,202) rotate(-36)" font-size="37" font-family='Liberation Mono,monospace' font-weight='bold' fill='#fff' fill-opacity='.2'>onlyIT</text><text transform="translate(773,501) rotate(-30.500)" font-size="54" font-family='Liberation Mono,monospace' font-weight='bold' fill='#fff' fill-opacity='.2'>onlyIT</text><rect width="949" height="1" fill="#7c8ca4"/><rect width="1" height="652" fill="#56688a"/></svg>
<div style="left:937px;top:45px;width:17px;height:652px;background:linear-gradient(90deg,#e8e8e8,#f8f8f8 40%,#fff)"></div>
<div style="left:937px;top:45px;width:17px;height:18px;background:#fbfbfb"></div>
<div style="left:941px;top:52px;width:0px;height:0px;border-left:4px solid transparent;border-right:4px solid transparent;border-bottom:4px solid #000;border-top:0"></div>
<div style="left:938px;top:64px;width:15px;height:540px;background:linear-gradient(90deg,#f4f2f2,#ececec 60%,#eef0ec);border:1px solid;border-color:#fff #868a84 #868a84 #fff"></div>
<div style="left:937px;top:680px;width:17px;height:17px;background:#fbfbfb"></div>
<div class="arr" style="left:941px;top:688px;width:0px;height:0px;"></div>
<div style="left:42px;top:60px;width:816px;height:613px;border:1px solid #14263a;border-radius:7px 7px 3px 3px;background:#e6e0e1;overflow:hidden;box-shadow:inset 1px 0 0 #fff,inset -1px 0 0 #f4f0fc,inset 0 -1px 0 #fff"><div style="left:0;top:0;width:814px;height:24px;background:linear-gradient(108deg,rgba(255,255,255,0) 0,rgba(255,255,255,0) 29%,rgba(255,255,255,0.35) 33%,rgba(255,255,255,0.21) 35.8%,rgba(255,255,255,0) 36.0%),linear-gradient(108deg,rgba(255,255,255,0) 0,rgba(255,255,255,0) 39%,rgba(255,255,255,0.2) 42%,rgba(255,255,255,0.12) 44.1%,rgba(255,255,255,0) 44.2%),linear-gradient(108deg,rgba(255,255,255,0) 0,rgba(255,255,255,0) 76%,rgba(255,255,255,0.35) 80%,rgba(255,255,255,0.21) 82.8%,rgba(255,255,255,0) 83.0%),linear-gradient(90deg,#f4f4f4 0,#eeeeee 12%,#e2e2e2 28%,#d8d8d8 45%,#d6d6d6 100%)"></div><div style="left:0;top:0;width:814px;height:1px;background:#fff"></div></div>
<svg style="left:48px;top:65px" width="16" height="15" viewBox="0 0 16 15" shape-rendering="crispEdges"><path d="M0 4h3V2h2V0h10v9l-5 6H0z" fill="#000"/><path d="M6 1h7v1H6zM4 3h7v1H4zM1 6h9v6H1zM12 4h1v5h-1zM14 2h1v4h-1z" fill="#fff"/><path d="M2 8h5v1H2zM2 10h4v1H2z" fill="#909090"/></svg>
<div class="tb" style="left:67px;top:68px;"><svg class="p" width="78" height="14" viewBox="0 0 78 14"><title>员工资料管理</title><g stroke="currentColor" transform="translate(0,-1)"><use href="#g5458" x="0"/><use href="#g5458" x="1"/><use href="#g5de5" x="13"/><use href="#g5de5" x="14"/><use href="#g8d44" x="26"/><use href="#g8d44" x="27"/><use href="#g6599" x="39"/><use href="#g6599" x="40"/><use href="#g7ba1" x="52"/><use href="#g7ba1" x="53"/><use href="#g7406" x="65"/><use href="#g7406" x="66"/></g></svg></div>
<div style="left:757px;top:60px;width:94px;height:18px;border:1px solid #404040;border-top:0;border-radius:0 0 6px 6px;background:linear-gradient(#e8e8e8,#dedede);overflow:hidden"><div style="left:24px;top:0;width:1px;height:18px;background:#505050"></div><div style="left:50px;top:0;width:1px;height:18px;background:#505050"></div><div style="left:6px;top:9px;width:12px;height:5px;border:1px solid #484848;background:#fff;border-radius:1.500px"></div><div style="left:31px;top:4px;width:12px;height:10px;border:1px solid #a4a4a4;background:#e6e6e6"></div><div style="left:34px;top:7px;width:6px;height:4px;border:1px solid #a4a4a4"></div><svg style="left:66px;top:4px" width="11" height="10" viewBox="0 0 11 10"><path d="M2 1.500l7 7M9 1.500l-7 7" stroke="#3c3c3c" stroke-width="4.400" stroke-linecap="square"/><path d="M2 1.500l7 7M9 1.500l-7 7" stroke="#f6f6f6" stroke-width="2.400" stroke-linecap="square"/></svg></div>
<div style="left:46px;top:84px;width:808px;height:30px;background:#efefef;border:1px solid #a2a2a2;box-shadow:inset 1px 1px 0 #fff,1px 1px 0 #fff"></div>
<div style="left:51px;top:89px;width:2px;height:21px;border-left:1px solid #fff;border-right:1px solid #a0a0a0"></div>
<svg style="left:58px;top:92px" width="14" height="16" viewBox="0 0 14 16" shape-rendering="crispEdges"><path d="M1.500 0.500h11v11l-3 3h-8z" fill="#fff" stroke="#000" stroke-width="1"/><path d="M9.500 14v-2.500h3" fill="none" stroke="#000"/><path d="M3 1h4v2h3v4H7v2H3V7H0V3h3z" fill="#0000c8"/><path d="M7 7h3v1H8v1H7z" fill="#9090e0"/><path d="M4 11h2v1H4z" fill="#40a040"/></svg>
<div class="t" style="left:77px;top:93px;"><svg class="p" width="32" height="14" viewBox="0 0 32 14"><title>新增A</title><g stroke="currentColor" transform="translate(0,-1)"><use href="#g65b0" x="0"/><use href="#g589e" x="12"/><use href="#g41" x="24"/><path d="M24 13.5h8"/></g></svg></div>
<svg style="left:128px;top:93px" width="16" height="14" viewBox="0 0 16 14" shape-rendering="crispEdges"><path d="M0 10h8v1H0zM0 12h9v1H0z" fill="#c01838"/><path d="M8 13l1-4 4-5 2 2-4 5z" fill="#c81838"/><path d="M10 0h3v3h-3z" fill="#a02848"/><path d="M3 1l4 4M4 5.500h3.500V2" stroke="#e05878" stroke-width="1.300" fill="none"/></svg>
<div class="t" style="left:147px;top:93px;"><svg class="p" width="30" height="14" viewBox="0 0 30 14"><title>修改E</title><g stroke="currentColor" transform="translate(0,-1)"><use href="#g4fee" x="0"/><use href="#g6539" x="12"/><use href="#g45" x="24"/><path d="M24 13.5h6"/></g></svg></div>
<svg style="left:193px;top:92px" width="15" height="15" viewBox="0 0 15 15"><rect x=".5" y=".5" width="14" height="14" rx="5" fill="#e01a1a" stroke="#8a0000" stroke-width="1"/><path d="M5 5l5 5M10 5l-5 5" stroke="#fff" stroke-width="2.200" stroke-linecap="round"/></svg>
<div class="t" style="left:213px;top:93px;"><svg class="p" width="32" height="14" viewBox="0 0 32 14"><title>删除D</title><g stroke="currentColor" transform="translate(0,-1)"><use href="#g5220" x="0"/><use href="#g9664" x="12"/><use href="#g44" x="24"/><path d="M24 13.5h8"/></g></svg></div>
<svg style="left:259px;top:92px" width="18" height="15" viewBox="0 0 18 15" shape-rendering="crispEdges"><path d="M5 0h9l-2 5H3z" fill="#fff" stroke="#000"/><path d="M1 6l3-2h12l1 2v6l-2 2H2l-1-1z" fill="#303030"/><path d="M2 7h13v1H2z" fill="#c0c0c0"/><path d="M3 11h11v1H3z" fill="#808080"/></svg>
<div class="t" style="left:281px;top:93px;"><svg class="p" width="30" height="14" viewBox="0 0 30 14"><title>打印P</title><g stroke="currentColor" transform="translate(0,-1)"><use href="#g6253" x="0"/><use href="#g5370" x="12"/><use href="#g50" x="24"/><path d="M24 13.5h6"/></g></svg></div>
<svg style="left:328px;top:91px" width="14" height="17" viewBox="0 0 14 17" shape-rendering="crispEdges"><path d="M0.5 0.5h9l4 4v12h-13z" fill="#fff" stroke="#000"/><path d="M9.5 0.5v4h4" fill="none" stroke="#000"/><path d="M4 8a3 3 0 0 1 5-2l1-1v4H6l1.5-1.500a2 2 0 0 0-2.500 1z M10 10a3 3 0 0 1-5 2l-1 1V9h4l-1.500 1.500a2 2 0 0 0 2.500-1z" fill="#108030"/></svg>
<div class="t" style="left:346px;top:93px;"><svg class="p" width="30" height="14" viewBox="0 0 30 14"><title>刷新F</title><g stroke="currentColor" transform="translate(0,-1)"><use href="#g5237" x="0"/><use href="#g65b0" x="12"/><use href="#g46" x="24"/><path d="M24 13.5h6"/></g></svg></div>
<svg style="left:388px;top:92px" width="17" height="15" viewBox="0 0 17 15" shape-rendering="crispEdges"><path d="M7 0h2v2H7z" fill="#008080"/><path d="M6 3h4v1H6z" fill="#006060"/><path d="M3 8h12l-3 5H0z" fill="#f0e890" stroke="#606060"/><path d="M9 9l4 1-2 2z" fill="#c0a000"/></svg>
<div class="t" style="left:408px;top:93px;"><svg class="p" width="32" height="14" viewBox="0 0 32 14"><title>功能O</title><g stroke="currentColor" transform="translate(0,-1)"><use href="#g529f" x="0"/><use href="#g80fd" x="12"/><use href="#g4f" x="24"/><path d="M24 13.5h8"/></g></svg></div>
<svg style="left:790px;top:92px" width="15" height="16" viewBox="0 0 15 16" shape-rendering="crispEdges"><path d="M9 0h3v3H9z" fill="#000080"/><path d="M10 1h1v1h-1z" fill="#fff"/><path d="M8 4h6v12H8z" fill="#202020"/><path d="M10 5h2v10h-2z" fill="#a0a0a0"/><path d="M4 7h4v1H4zM2 9h5v1H2zM0 11h2v1H0zM3 11h4v1H3zM5 13h3v1H5z" fill="#000"/></svg>
<div class="t" style="left:810px;top:93px;"><svg class="p" width="31" height="14" viewBox="0 0 31 14"><title>返回R</title><g stroke="currentColor" transform="translate(0,-1)"><use href="#g8fd4" x="0"/><use href="#g56de" x="12"/><use href="#g52" x="24"/><path d="M24 13.5h7"/></g></svg></div>
<div style="left:47px;top:116px;width:200px;height:28px;background:#efefef;border:2px solid;border-color:#808080 #fff #fff #808080"></div>
<div class="t g" style="left:59px;top:122px;"><svg class="p" width="48" height="14" viewBox="0 0 48 14"><title>部门结构</title><g stroke="#fff" transform="translate(1,0)"><use href="#g90e8" x="0"/><use href="#g95e8" x="12"/><use href="#g7ed3" x="24"/><use href="#g6784" x="36"/></g><g stroke="currentColor" transform="translate(0,-1)"><use href="#g90e8" x="0"/><use href="#g95e8" x="12"/><use href="#g7ed3" x="24"/><use href="#g6784" x="36"/></g></svg></div>
<div class="cb" style="left:112px;top:121px;width:116px;height:18px;"></div>
<div class="btn" style="left:210px;top:123px;width:16px;height:14px;"></div>
<div class="arr" style="left:214px;top:128px;width:0px;height:0px;"></div>
<div class="t g" style="left:116px;top:123px;"><svg class="p" width="36" height="14" viewBox="0 0 36 14"><title>本公司</title><g stroke="#fff" transform="translate(1,0)"><use href="#g672c" x="0"/><use href="#g516c" x="12"/><use href="#g53f8" x="24"/></g><g stroke="currentColor" transform="translate(0,-1)"><use href="#g672c" x="0"/><use href="#g516c" x="12"/><use href="#g53f8" x="24"/></g></svg></div>
<div style="left:48px;top:144px;width:198px;height:110px;background:linear-gradient(90deg,#e2f3fc 0,#eaf7fe 45%,#f3fafe 100%)"></div>
<svg style="left:66px;top:149px" width="12" height="12" viewBox="0 0 12 12" shape-rendering="crispEdges"><path d="M0.500 1.500v10h11v-10H5.500l-1-1H1.500z" fill="#f4f27c" stroke="#000"/></svg>
<div class="t" style="left:87px;top:149px;"><svg class="p" width="36" height="14" viewBox="0 0 36 14"><title>采购部</title><g stroke="currentColor" transform="translate(0,-1)"><use href="#g91c7" x="0"/><use href="#g8d2d" x="12"/><use href="#g90e8" x="24"/></g></svg></div>
<svg style="left:66px;top:167px" width="13" height="12" viewBox="0 0 13 12" shape-rendering="crispEdges"><path d="M1 1.500h4" stroke="#000"/><path d="M1.500 10.500l2-6h3l1.500-1h4l-1.500 7z" fill="#f4f27c"/><path d="M1.500 10.500l2-6h3l1.500-1h3.500M12 3.500l-1 4" fill="none" stroke="#000"/></svg>
<div class="t" style="left:87px;top:167px;"><svg class="p" width="36" height="14" viewBox="0 0 36 14"><title>生产部</title><g stroke="currentColor" transform="translate(0,-1)"><use href="#g751f" x="0"/><use href="#g4ea7" x="12"/><use href="#g90e8" x="24"/></g></svg></div>
<svg style="left:66px;top:185px" width="12" height="12" viewBox="0 0 12 12" shape-rendering="crispEdges"><path d="M0.500 1.500v10h11v-10H5.500l-1-1H1.500z" fill="#f4f27c" stroke="#000"/></svg>
<div class="t" style="left:87px;top:185px;"><svg class="p" width="36" height="14" viewBox="0 0 36 14"><title>工程部</title><g stroke="currentColor" transform="translate(0,-1)"><use href="#g5de5" x="0"/><use href="#g7a0b" x="12"/><use href="#g90e8" x="24"/></g></svg></div>
<svg style="left:66px;top:203px" width="12" height="12" viewBox="0 0 12 12" shape-rendering="crispEdges"><path d="M0.500 1.500v10h11v-10H5.500l-1-1H1.500z" fill="#f4f27c" stroke="#000"/></svg>
<div class="t" style="left:87px;top:203px;"><svg class="p" width="36" height="14" viewBox="0 0 36 14"><title>综合部</title><g stroke="currentColor" transform="translate(0,-1)"><use href="#g7efc" x="0"/><use href="#g5408" x="12"/><use href="#g90e8" x="24"/></g></svg></div>
<svg style="left:66px;top:221px" width="12" height="12" viewBox="0 0 12 12" shape-rendering="crispEdges"><path d="M0.500 1.500v10h11v-10H5.500l-1-1H1.500z" fill="#f4f27c" stroke="#000"/></svg>
<div class="t" style="left:87px;top:221px;"><svg class="p" width="36" height="14" viewBox="0 0 36 14"><title>产品部</title><g stroke="currentColor" transform="translate(0,-1)"><use href="#g4ea7" x="0"/><use href="#g54c1" x="12"/><use href="#g90e8" x="24"/></g></svg></div>
<svg style="left:66px;top:239px" width="12" height="12" viewBox="0 0 12 12" shape-rendering="crispEdges"><path d="M0.500 1.500v10h11v-10H5.500l-1-1H1.500z" fill="#f4f27c" stroke="#000"/></svg>
<div class="t" style="left:87px;top:239px;"><svg class="p" width="36" height="14" viewBox="0 0 36 14"><title>发展部</title><g stroke="currentColor" transform="translate(0,-1)"><use href="#g53d1" x="0"/><use href="#g5c55" x="12"/><use href="#g90e8" x="24"/></g></svg></div>
<div style="left:231px;top:144px;width:16px;height:110px;background:#fbfbfb"></div>
<div style="left:231px;top:163px;width:16px;height:73px;background:#e5e5e5"></div>
<div style="left:235px;top:151px;width:0px;height:0px;border-left:4px solid transparent;border-right:4px solid transparent;border-bottom:4px solid #000;border-top:0"></div>
<div style="left:232px;top:187px;width:15px;height:20px;background:linear-gradient(90deg,#fff,#ececec);border:1px solid #8c8c8c;border-radius:1px"></div>
<div class="arr" style="left:235px;top:243px;width:0px;height:0px;"></div>
<div style="left:47px;top:254px;width:200px;height:2px;background:#c8c8c8"></div>
<div style="left:48px;top:256px;width:198px;height:22px;background:#efefef;border-top:1px solid #fff;border-bottom:1px solid #c0c0c0"></div>
<div class="t g" style="left:56px;top:259px;"><svg class="p" width="48" height="14" viewBox="0 0 48 14"><title>限制条件</title><g stroke="#fff" transform="translate(1,0)"><use href="#g9650" x="0"/><use href="#g5236" x="12"/><use href="#g6761" x="24"/><use href="#g4ef6" x="36"/></g><g stroke="currentColor" transform="translate(0,-1)"><use href="#g9650" x="0"/><use href="#g5236" x="12"/><use href="#g6761" x="24"/><use href="#g4ef6" x="36"/></g></svg></div>
<svg style="left:131px;top:258px" width="13" height="15" viewBox="0 0 13 15" shape-rendering="crispEdges"><path d="M8 0l3 1-3 5h3l-7 8 2-6H3z" fill="#f0d000" stroke="#404000" stroke-width=".6"/><path d="M2 12l3-3M1 8l2 1" stroke="#000"/><path d="M6 11c3-1 5 1 3 2s-2 2 1 2" stroke="#00a0a0" fill="none"/></svg>
<div class="t" style="left:150px;top:259px;color:#9a9a00"><svg class="p" width="24" height="14" viewBox="0 0 24 14"><title>检索</title><g stroke="currentColor" transform="translate(0,-1)"><use href="#g68c0" x="0"/><use href="#g7d22" x="12"/></g></svg></div>
<svg style="left:221px;top:261px" width="14" height="11" viewBox="0 0 14 11" shape-rendering="crispEdges"><path d="M1 1h9V0h1l3 2.500-3 2.500h-1V4H1z" fill="#e00000"/><path d="M1 1h2v3H1z" fill="#701000"/><path d="M10 0h1l3 2.500-3 2.500h-1z" fill="#b01000"/><path d="M13 7H4V6H3L0 8.500 3 11h1v-1h9z" fill="#0000c0"/><path d="M11 7h2v3h-2z" fill="#000050"/><path d="M3 5h8v1H3z" fill="#fff"/></svg>
<div style="left:48px;top:278px;width:198px;height:70px;background:#dcdcf9"></div>
<div style="left:50px;top:289px;width:12px;height:12px;background:#fff;border:2px solid;border-color:#808080 #e0e0e0 #e0e0e0 #808080"></div>
<div class="t" style="left:68px;top:289px;"><svg class="p" width="12" height="14" viewBox="0 0 12 14"><title>性</title><g stroke="currentColor" transform="translate(0,-1)"><use href="#g6027" x="0"/></g></svg></div>
<div class="t" style="left:103px;top:289px;"><svg class="p" width="12" height="14" viewBox="0 0 12 14"><title>别</title><g stroke="currentColor" transform="translate(0,-1)"><use href="#g522b" x="0"/></g></svg></div>
<div class="cb" style="left:123px;top:284px;width:117px;height:22px;"></div>
<div class="btn" style="left:222px;top:286px;width:16px;height:18px;"></div>
<div class="arr" style="left:226px;top:293px;width:0px;height:0px;"></div>
<div class="t" style="left:127px;top:289px;"><svg class="p" width="12" height="14" viewBox="0 0 12 14"><title>女</title><g stroke="currentColor" transform="translate(0,-1)"><use href="#g5973" x="0"/></g></svg></div>
<div style="left:50px;top:313px;width:12px;height:12px;background:#fff;border:2px solid;border-color:#808080 #e0e0e0 #e0e0e0 #808080"></div>
<div class="t" style="left:68px;top:313px;"><svg class="p" width="12" height="14" viewBox="0 0 12 14"><title>民</title><g stroke="currentColor" transform="translate(0,-1)"><use href="#g6c11" x="0"/></g></svg></div>
<div class="t" style="left:103px;top:313px;"><svg class="p" width="12" height="14" viewBox="0 0 12 14"><title>族</title><g stroke="currentColor" transform="translate(0,-1)"><use href="#g65cf" x="0"/></g></svg></div>
<div class="cb" style="left:123px;top:308px;width:117px;height:22px;"></div>
<div class="btn" style="left:222px;top:310px;width:16px;height:18px;"></div>
<div class="arr" style="left:226px;top:317px;width:0px;height:0px;"></div>
<div class="t" style="left:127px;top:313px;"><svg class="p" width="24" height="14" viewBox="0 0 24 14"><title>白族</title><g stroke="currentColor" transform="translate(0,-1)"><use href="#g767d" x="0"/><use href="#g65cf" x="12"/></g></svg></div>
<div style="left:50px;top:337px;width:12px;height:12px;background:#fff;border:2px solid;border-color:#808080 #e0e0e0 #e0e0e0 #808080"></div>
<div class="t" style="left:68px;top:337px;"><svg class="p" width="48" height="14" viewBox="0 0 48 14"><title>政治面貌</title><g stroke="currentColor" transform="translate(0,-1)"><use href="#g653f" x="0"/><use href="#g6cbb" x="12"/><use href="#g9762" x="24"/><use href="#g8c8c" x="36"/></g></svg></div>
<div class="cb" style="left:123px;top:332px;width:117px;height:22px;"></div>
<div class="btn" style="left:222px;top:334px;width:16px;height:18px;"></div>
<div class="arr" style="left:226px;top:341px;width:0px;height:0px;"></div>
<div class="t" style="left:127px;top:337px;"><svg class="p" width="24" height="14" viewBox="0 0 24 14"><title>群众</title><g stroke="currentColor" transform="translate(0,-1)"><use href="#g7fa4" x="0"/><use href="#g4f17" x="12"/></g></svg></div>
<div style="left:246px;top:115px;width:6px;height:230px;background:#cacaca;border-left:1px solid #fff;border-right:1px solid #fff"></div>
<div style="left:252px;top:116px;width:601px;height:27px;background:#efefef;border-top:1px solid #969696;border-left:1px solid #969696"></div>
<svg style="left:261px;top:121px" width="14" height="11" viewBox="0 0 14 11" shape-rendering="crispEdges"><path d="M1 1h9V0h1l3 2.500-3 2.500h-1V4H1z" fill="#e00000"/><path d="M1 1h2v3H1z" fill="#701000"/><path d="M10 0h1l3 2.500-3 2.500h-1z" fill="#b01000"/><path d="M13 7H4V6H3L0 8.500 3 11h1v-1h9z" fill="#0000c0"/><path d="M11 7h2v3h-2z" fill="#000050"/><path d="M3 5h8v1H3z" fill="#fff"/></svg>
<div class="t g" style="left:291px;top:121px;"><svg class="p" width="48" height="14" viewBox="0 0 48 14"><title>员工清单</title><g stroke="#fff" transform="translate(1,0)"><use href="#g5458" x="0"/><use href="#g5de5" x="12"/><use href="#g6e05" x="24"/><use href="#g5355" x="36"/></g><g stroke="currentColor" transform="translate(0,-1)"><use href="#g5458" x="0"/><use href="#g5de5" x="12"/><use href="#g6e05" x="24"/><use href="#g5355" x="36"/></g></svg></div>
<div style="left:380px;top:124px;width:12px;height:12px;background:#fff;border:2px solid;border-color:#808080 #e0e0e0 #e0e0e0 #808080"></div>
<div class="t g" style="left:398px;top:122px;"><svg class="p" width="108" height="14" viewBox="0 0 108 14"><title>显示子部门相关信息</title><g stroke="#fff" transform="translate(1,0)"><use href="#g663e" x="0"/><use href="#g793a" x="12"/><use href="#g5b50" x="24"/><use href="#g90e8" x="36"/><use href="#g95e8" x="48"/><use href="#g76f8" x="60"/><use href="#g5173" x="72"/><use href="#g4fe1" x="84"/><use href="#g606f" x="96"/></g><g stroke="currentColor" transform="translate(0,-1)"><use href="#g663e" x="0"/><use href="#g793a" x="12"/><use href="#g5b50" x="24"/><use href="#g90e8" x="36"/><use href="#g95e8" x="48"/><use href="#g76f8" x="60"/><use href="#g5173" x="72"/><use href="#g4fe1" x="84"/><use href="#g606f" x="96"/></g></svg></div>
<svg style="left:518px;top:124px" width="12" height="11" viewBox="0 0 12 11" shape-rendering="crispEdges"><path d="M0 1h8v4H0z" fill="#000080"/><path d="M1 2h6v1H1z" fill="#3858c0"/><path d="M9 1h1v9H9zM6 9h5v1H6z" fill="#000"/></svg>
<div class="t g" style="left:538px;top:122px;"><svg class="p" width="48" height="14" viewBox="0 0 48 14"><title>模糊查询</title><g stroke="#fff" transform="translate(1,0)"><use href="#g6a21" x="0"/><use href="#g7cca" x="12"/><use href="#g67e5" x="24"/><use href="#g8be2" x="36"/></g><g stroke="currentColor" transform="translate(0,-1)"><use href="#g6a21" x="0"/><use href="#g7cca" x="12"/><use href="#g67e5" x="24"/><use href="#g8be2" x="36"/></g></svg></div>
<div style="left:594px;top:121px;width:120px;height:18px;background:#fff;border:2px solid;border-color:#808080 #e8e8e8 #e8e8e8 #808080"></div>
<svg style="left:723px;top:124px" width="11" height="14" viewBox="0 0 11 14" shape-rendering="crispEdges"><path d="M1 0h9v5H8v8H3V5H1z" fill="#000"/><path d="M2 1h7v3H7v2H4V4H2z" fill="#f0e020"/><path d="M4 7h3v5H4z" fill="#20b0c0"/><path d="M5 9h1v1H5z" fill="#fff"/></svg>
<div style="left:252px;top:143px;width:601px;height:485px;background:linear-gradient(180deg,#f2fbff,#fafdff 40%,#ffffff)"></div>
<div style="left:252px;top:143px;width:599px;height:125px;background:#a9c9b3"></div>
<div style="left:253px;top:144px;width:16px;height:23px;background:#d9ece3"></div>
<div style="left:256px;top:154px;width:7px;height:1px;background:#0000a0"></div>
<div style="left:270px;top:144px;width:64px;height:23px;background:#d9ece3"></div>
<div class="t" style="left:290px;top:148px;color:#00009c"><svg class="p" width="24" height="14" viewBox="0 0 24 14"><title>姓名</title><g stroke="currentColor" transform="translate(0,-1)"><use href="#g59d3" x="0"/><use href="#g540d" x="12"/></g></svg></div>
<div style="left:335px;top:144px;width:56px;height:23px;background:#d9ece3"></div>
<div class="t" style="left:351px;top:148px;color:#00009c"><svg class="p" width="24" height="14" viewBox="0 0 24 14"><title>工号</title><g stroke="currentColor" transform="translate(0,-1)"><use href="#g5de5" x="0"/><use href="#g53f7" x="12"/></g></svg></div>
<div style="left:392px;top:144px;width:82px;height:23px;background:#d9ece3"></div>
<div class="t" style="left:421px;top:148px;color:#00009c"><svg class="p" width="24" height="14" viewBox="0 0 24 14"><title>部门</title><g stroke="currentColor" transform="translate(0,-1)"><use href="#g90e8" x="0"/><use href="#g95e8" x="12"/></g></svg></div>
<div style="left:475px;top:144px;width:44px;height:23px;background:#d9ece3"></div>
<div class="t" style="left:485px;top:148px;color:#00009c"><svg class="p" width="24" height="14" viewBox="0 0 24 14"><title>性别</title><g stroke="currentColor" transform="translate(0,-1)"><use href="#g6027" x="0"/><use href="#g522b" x="12"/></g></svg></div>
<div style="left:520px;top:144px;width:67px;height:23px;background:#d9ece3"></div>
<div class="t" style="left:541px;top:148px;color:#00009c"><svg class="p" width="24" height="14" viewBox="0 0 24 14"><title>职称</title><g stroke="currentColor" transform="translate(0,-1)"><use href="#g804c" x="0"/><use href="#g79f0" x="12"/></g></svg></div>
<div style="left:588px;top:144px;width:89px;height:23px;background:#d9ece3"></div>
<div class="t" style="left:620px;top:148px;color:#00009c"><svg class="p" width="24" height="14" viewBox="0 0 24 14"><title>电话</title><g stroke="currentColor" transform="translate(0,-1)"><use href="#g7535" x="0"/><use href="#g8bdd" x="12"/></g></svg></div>
<div style="left:678px;top:144px;width:93px;height:23px;background:#d9ece3"></div>
<div class="t" style="left:712px;top:148px;color:#00009c"><svg class="p" width="24" height="14" viewBox="0 0 24 14"><title>手机</title><g stroke="currentColor" transform="translate(0,-1)"><use href="#g624b" x="0"/><use href="#g673a" x="12"/></g></svg></div>
<div style="left:772px;top:144px;width:78px;height:23px;background:#d9ece3"></div>
<div class="t" style="left:787px;top:148px;color:#00009c"><svg class="p" width="48" height="14" viewBox="0 0 48 14"><title>入职日期</title><g stroke="currentColor" transform="translate(0,-1)"><use href="#g5165" x="0"/><use href="#g804c" x="12"/><use href="#g65e5" x="24"/><use href="#g671f" x="36"/></g></svg></div>
<div style="left:253px;top:168px;width:16px;height:24px;background:#d9ece3"></div>
<svg style="left:255px;top:173px" width="11" height="11" viewBox="0 0 11 11"><path d="M5.500 0L11 5.500 5.500 11 0 5.500z" fill="#0000a8"/></svg>
<div style="left:270px;top:168px;width:64px;height:24px;background:#5563ea"></div>
<div class="t" style="left:273px;top:172px;color:#fff"><svg class="p" width="36" height="14" viewBox="0 0 36 14"><title>王丽东</title><g stroke="currentColor" transform="translate(0,-1)"><use href="#g738b" x="0"/><use href="#g4e3d" x="12"/><use href="#g4e1c" x="24"/></g></svg></div>
<div style="left:335px;top:168px;width:56px;height:24px;background:#5563ea"></div>
<div class="t" style="left:338px;top:172px;color:#fff">1601</div>
<div style="left:392px;top:168px;width:82px;height:24px;background:#5563ea"></div>
<div class="t" style="left:395px;top:172px;color:#fff"><svg class="p" width="36" height="14" viewBox="0 0 36 14"><title>生产部</title><g stroke="currentColor" transform="translate(0,-1)"><use href="#g751f" x="0"/><use href="#g4ea7" x="12"/><use href="#g90e8" x="24"/></g></svg></div>
<div style="left:475px;top:168px;width:44px;height:24px;background:#5563ea"></div>
<div class="t" style="left:478px;top:172px;color:#fff"><svg class="p" width="12" height="14" viewBox="0 0 12 14"><title>男</title><g stroke="currentColor" transform="translate(0,-1)"><use href="#g7537" x="0"/></g></svg></div>
<div style="left:520px;top:168px;width:67px;height:24px;background:#5563ea"></div>
<div class="t" style="left:523px;top:172px;color:#fff"><svg class="p" width="36" height="14" viewBox="0 0 36 14"><title>工程师</title><g stroke="currentColor" transform="translate(0,-1)"><use href="#g5de5" x="0"/><use href="#g7a0b" x="12"/><use href="#g5e08" x="24"/></g></svg></div>
<div style="left:588px;top:168px;width:89px;height:24px;background:#5563ea"></div>
<div class="t" style="left:591px;top:172px;color:#fff">85462761</div>
<div style="left:678px;top:168px;width:93px;height:24px;background:#5563ea"></div>
<div style="left:772px;top:168px;width:78px;height:24px;background:#5563ea"></div>
<div class="t" style="left:775px;top:172px;color:#fff">2006-10-13</div>
<div style="left:253px;top:193px;width:16px;height:24px;background:#d9ece3"></div>
<div style="left:270px;top:193px;width:64px;height:24px;background:#ffffff"></div>
<div class="t" style="left:273px;top:197px;color:#000"><svg class="p" width="36" height="14" viewBox="0 0 36 14"><title>赵志光</title><g stroke="currentColor" transform="translate(0,-1)"><use href="#g8d75" x="0"/><use href="#g5fd7" x="12"/><use href="#g5149" x="24"/></g></svg></div>
<div style="left:335px;top:193px;width:56px;height:24px;background:#ffffff"></div>
<div class="t" style="left:338px;top:197px;color:#000">1602</div>
<div style="left:392px;top:193px;width:82px;height:24px;background:#ffffff"></div>
<div class="t" style="left:395px;top:197px;color:#000"><svg class="p" width="36" height="14" viewBox="0 0 36 14"><title>生产部</title><g stroke="currentColor" transform="translate(0,-1)"><use href="#g751f" x="0"/><use href="#g4ea7" x="12"/><use href="#g90e8" x="24"/></g></svg></div>
<div style="left:475px;top:193px;width:44px;height:24px;background:#ffffff"></div>
<div class="t" style="left:478px;top:197px;color:#000"><svg class="p" width="12" height="14" viewBox="0 0 12 14"><title>男</title><g stroke="currentColor" transform="translate(0,-1)"><use href="#g7537" x="0"/></g></svg></div>
<div style="left:520px;top:193px;width:67px;height:24px;background:#ffffff"></div>
<div class="t" style="left:523px;top:197px;color:#000"><svg class="p" width="36" height="14" viewBox="0 0 36 14"><title>工程师</title><g stroke="currentColor" transform="translate(0,-1)"><use href="#g5de5" x="0"/><use href="#g7a0b" x="12"/><use href="#g5e08" x="24"/></g></svg></div>
<div style="left:588px;top:193px;width:89px;height:24px;background:#ffffff"></div>
<div class="t" style="left:591px;top:197px;color:#000">85462761</div>
<div style="left:678px;top:193px;width:93px;height:24px;background:#ffffff"></div>
<div style="left:772px;top:193px;width:78px;height:24px;background:#ffffff"></div>
<div class="t" style="left:775px;top:197px;color:#000">2005-10-13</div>
<div style="left:253px;top:218px;width:16px;height:24px;background:#d9ece3"></div>
<div style="left:270px;top:218px;width:64px;height:24px;background:#f0fcfc"></div>
<div class="t" style="left:273px;top:222px;color:#000"><svg class="p" width="36" height="14" viewBox="0 0 36 14"><title>马永亮</title><g stroke="currentColor" transform="translate(0,-1)"><use href="#g9a6c" x="0"/><use href="#g6c38" x="12"/><use href="#g4eae" x="24"/></g></svg></div>
<div style="left:335px;top:218px;width:56px;height:24px;background:#f0fcfc"></div>
<div class="t" style="left:338px;top:222px;color:#000">1603</div>
<div style="left:392px;top:218px;width:82px;height:24px;background:#f0fcfc"></div>
<div class="t" style="left:395px;top:222px;color:#000"><svg class="p" width="36" height="14" viewBox="0 0 36 14"><title>生产部</title><g stroke="currentColor" transform="translate(0,-1)"><use href="#g751f" x="0"/><use href="#g4ea7" x="12"/><use href="#g90e8" x="24"/></g></svg></div>
<div style="left:475px;top:218px;width:44px;height:24px;background:#f0fcfc"></div>
<div class="t" style="left:478px;top:222px;color:#000"><svg class="p" width="12" height="14" viewBox="0 0 12 14"><title>男</title><g stroke="currentColor" transform="translate(0,-1)"><use href="#g7537" x="0"/></g></svg></div>
<div style="left:520px;top:218px;width:67px;height:24px;background:#f0fcfc"></div>
<div class="t" style="left:523px;top:222px;color:#000"><svg class="p" width="36" height="14" viewBox="0 0 36 14"><title>工程师</title><g stroke="currentColor" transform="translate(0,-1)"><use href="#g5de5" x="0"/><use href="#g7a0b" x="12"/><use href="#g5e08" x="24"/></g></svg></div>
<div style="left:588px;top:218px;width:89px;height:24px;background:#f0fcfc"></div>
<div class="t" style="left:591px;top:222px;color:#000">85462761</div>
<div style="left:678px;top:218px;width:93px;height:24px;background:#f0fcfc"></div>
<div style="left:772px;top:218px;width:78px;height:24px;background:#f0fcfc"></div>
<div class="t" style="left:775px;top:222px;color:#000">2005-10-13</div>
<div style="left:253px;top:243px;width:16px;height:24px;background:#d9ece3"></div>
<div style="left:270px;top:243px;width:64px;height:24px;background:#ffffff"></div>
<div class="t" style="left:273px;top:247px;color:#000"><svg class="p" width="36" height="14" viewBox="0 0 36 14"><title>张耀忠</title><g stroke="currentColor" transform="translate(0,-1)"><use href="#g5f20" x="0"/><use href="#g8000" x="12"/><use href="#g5fe0" x="24"/></g></svg></div>
<div style="left:335px;top:243px;width:56px;height:24px;background:#ffffff"></div>
<div class="t" style="left:338px;top:247px;color:#000">1604</div>
<div style="left:392px;top:243px;width:82px;height:24px;background:#ffffff"></div>
<div class="t" style="left:395px;top:247px;color:#000"><svg class="p" width="36" height="14" viewBox="0 0 36 14"><title>生产部</title><g stroke="currentColor" transform="translate(0,-1)"><use href="#g751f" x="0"/><use href="#g4ea7" x="12"/><use href="#g90e8" x="24"/></g></svg></div>
<div style="left:475px;top:243px;width:44px;height:24px;background:#ffffff"></div>
<div class="t" style="left:478px;top:247px;color:#000"><svg class="p" width="12" height="14" viewBox="0 0 12 14"><title>男</title><g stroke="currentColor" transform="translate(0,-1)"><use href="#g7537" x="0"/></g></svg></div>
<div style="left:520px;top:243px;width:67px;height:24px;background:#ffffff"></div>
<div class="t" style="left:523px;top:247px;color:#000"><svg class="p" width="48" height="14" viewBox="0 0 48 14"><title>高级工程</title><g stroke="currentColor" transform="translate(0,-1)"><use href="#g9ad8" x="0"/><use href="#g7ea7" x="12"/><use href="#g5de5" x="24"/><use href="#g7a0b" x="36"/></g></svg></div>
<div style="left:588px;top:243px;width:89px;height:24px;background:#ffffff"></div>
<div class="t" style="left:591px;top:247px;color:#000">85462761</div>
<div style="left:678px;top:243px;width:93px;height:24px;background:#ffffff"></div>
<div style="left:772px;top:243px;width:78px;height:24px;background:#ffffff"></div>
<div class="t" style="left:775px;top:247px;color:#000">2002-10-13</div>
<div style="left:830px;top:556px;width:23px;height:2px;background:#c4c4c4"></div>
<div style="left:830px;top:558px;width:23px;height:22px;background:#e9e9e9"></div>
<div style="left:830px;top:580px;width:23px;height:48px;background:#fff"></div>
<div style="left:830px;top:628px;width:23px;height:18px;background:#f4f4f4;border-top:1px solid #d0d0d0"></div>
<div style="left:830px;top:629px;width:10px;height:17px;background:#dcdcdc"></div>
<div style="left:844px;top:632px;width:0px;height:0px;border-top:4px solid transparent;border-bottom:4px solid transparent;border-left:4px solid #000"></div>
<div style="left:830px;top:646px;width:23px;height:1px;background:#b0b0b0"></div>
<div style="left:830px;top:647px;width:23px;height:21px;background:#efefef"></div>
<svg style="left:840px;top:654px" width="12" height="12" viewBox="0 0 12 12" shape-rendering="crispEdges"><path d="M11 1L1 11M11 5L5 11M11 9L9 11" stroke="#888" stroke-width="1"/><path d="M11 2L2 11M11 6L6 11M11 10L10 11" stroke="#fff" stroke-width="1"/></svg>
<div style="left:44px;top:339px;width:787px;height:358px;border:1px solid #1a2c34;border-bottom:0;border-radius:7px 7px 0 0;background:#ececec;overflow:hidden;box-shadow:inset 1px 0 0 #fff"><div style="left:0;top:0;width:785px;height:25px;background:linear-gradient(108deg,rgba(255,255,255,0) 0,rgba(255,255,255,0) 29%,rgba(255,255,255,0.35) 33%,rgba(255,255,255,0.21) 35.8%,rgba(255,255,255,0) 36.0%),linear-gradient(108deg,rgba(255,255,255,0) 0,rgba(255,255,255,0) 39%,rgba(255,255,255,0.2) 42%,rgba(255,255,255,0.12) 44.1%,rgba(255,255,255,0) 44.2%),linear-gradient(108deg,rgba(255,255,255,0) 0,rgba(255,255,255,0) 76%,rgba(255,255,255,0.35) 80%,rgba(255,255,255,0.21) 82.8%,rgba(255,255,255,0) 83.0%),linear-gradient(90deg,#f4f4f4 0,#eeeeee 12%,#e2e2e2 28%,#d8d8d8 45%,#d6d6d6 100%)"></div><div style="left:0;top:0;width:785px;height:1px;background:#fff"></div></div>
<svg style="left:50px;top:344px" width="16" height="15" viewBox="0 0 16 15" shape-rendering="crispEdges"><path d="M0 4h3V2h2V0h10v9l-5 6H0z" fill="#000"/><path d="M6 1h7v1H6zM4 3h7v1H4zM1 6h9v6H1zM12 4h1v5h-1zM14 2h1v4h-1z" fill="#fff"/><path d="M2 8h5v1H2zM2 10h4v1H2z" fill="#909090"/></svg>
<div class="tb" style="left:69px;top:347px;"><svg class="p" width="52" height="14" viewBox="0 0 52 14"><title>计件工资</title><g stroke="currentColor" transform="translate(0,-1)"><use href="#g8ba1" x="0"/><use href="#g8ba1" x="1"/><use href="#g4ef6" x="13"/><use href="#g4ef6" x="14"/><use href="#g5de5" x="26"/><use href="#g5de5" x="27"/><use href="#g8d44" x="39"/><use href="#g8d44" x="40"/></g></svg></div>
<div style="left:781px;top:339px;width:43px;height:18px;border:1px solid #5a2a2a;border-top:0;border-radius:0 0 5px 5px;background:linear-gradient(#f0b8aa,#e6907c 46%,#cf452a 52%,#d65a3a 80%,#e28a62)"><svg style="left:15px;top:4px" width="11" height="10" viewBox="0 0 11 10"><path d="M2 1.500l7 7M9 1.500l-7 7" stroke="#5a2a24" stroke-width="4.400" stroke-linecap="square"/><path d="M2 1.500l7 7M9 1.500l-7 7" stroke="#fff" stroke-width="2.400" stroke-linecap="square"/></svg></div>
<div style="left:51px;top:365px;width:146px;height:29px;background:#efefef;border:2px solid;border-color:#707070 #fff #fff #707070"></div>
<div class="t g" style="left:61px;top:372px;"><svg class="p" width="24" height="14" viewBox="0 0 24 14"><title>公司</title><g stroke="#fff" transform="translate(1,0)"><use href="#g516c" x="0"/><use href="#g53f8" x="12"/></g><g stroke="currentColor" transform="translate(0,-1)"><use href="#g516c" x="0"/><use href="#g53f8" x="12"/></g></svg></div>
<div class="cb" style="left:101px;top:370px;width:87px;height:19px;"></div>
<div class="btn" style="left:170px;top:372px;width:16px;height:15px;"></div>
<div class="arr" style="left:174px;top:377px;width:0px;height:0px;"></div>
<div class="t g" style="left:105px;top:372px;"><svg class="p" width="36" height="14" viewBox="0 0 36 14"><title>本公司</title><g stroke="#fff" transform="translate(1,0)"><use href="#g672c" x="0"/><use href="#g516c" x="12"/><use href="#g53f8" x="24"/></g><g stroke="currentColor" transform="translate(0,-1)"><use href="#g672c" x="0"/><use href="#g516c" x="12"/><use href="#g53f8" x="24"/></g></svg></div>
<div style="left:51px;top:394px;width:146px;height:303px;background:linear-gradient(90deg,#e2f3fc 0,#eaf7fe 45%,#f3fafe 100%)"></div>
<div style="left:197px;top:364px;width:1px;height:333px;background:#b8b8b8"></div>
<svg style="left:70px;top:399px" width="12" height="12" viewBox="0 0 12 12" shape-rendering="crispEdges"><path d="M0.500 1.500v10h11v-10H5.500l-1-1H1.500z" fill="#f4f27c" stroke="#000"/></svg>
<div class="t" style="left:91px;top:399px;"><svg class="p" width="36" height="14" viewBox="0 0 36 14"><title>开发部</title><g stroke="currentColor" transform="translate(0,-1)"><use href="#g5f00" x="0"/><use href="#g53d1" x="12"/><use href="#g90e8" x="24"/></g></svg></div>
<svg style="left:70px;top:417px" width="12" height="12" viewBox="0 0 12 12" shape-rendering="crispEdges"><path d="M0.500 1.500v10h11v-10H5.500l-1-1H1.500z" fill="#f4f27c" stroke="#000"/></svg>
<div class="t" style="left:91px;top:417px;"><svg class="p" width="36" height="14" viewBox="0 0 36 14"><title>总经办</title><g stroke="currentColor" transform="translate(0,-1)"><use href="#g603b" x="0"/><use href="#g7ecf" x="12"/><use href="#g529e" x="24"/></g></svg></div>
<svg style="left:70px;top:435px" width="12" height="12" viewBox="0 0 12 12" shape-rendering="crispEdges"><path d="M0.500 1.500v10h11v-10H5.500l-1-1H1.500z" fill="#f4f27c" stroke="#000"/></svg>
<div class="t" style="left:91px;top:435px;"><svg class="p" width="36" height="14" viewBox="0 0 36 14"><title>财务部</title><g stroke="currentColor" transform="translate(0,-1)"><use href="#g8d22" x="0"/><use href="#g52a1" x="12"/><use href="#g90e8" x="24"/></g></svg></div>
<svg style="left:70px;top:453px" width="12" height="12" viewBox="0 0 12 12" shape-rendering="crispEdges"><path d="M0.500 1.500v10h11v-10H5.500l-1-1H1.500z" fill="#f4f27c" stroke="#000"/></svg>
<div class="t" style="left:91px;top:453px;"><svg class="p" width="36" height="14" viewBox="0 0 36 14"><title>人事部</title><g stroke="currentColor" transform="translate(0,-1)"><use href="#g4eba" x="0"/><use href="#g4e8b" x="12"/><use href="#g90e8" x="24"/></g></svg></div>
<svg style="left:70px;top:471px" width="12" height="12" viewBox="0 0 12 12" shape-rendering="crispEdges"><path d="M0.500 1.500v10h11v-10H5.500l-1-1H1.500z" fill="#f4f27c" stroke="#000"/></svg>
<div class="t" style="left:91px;top:471px;"><svg class="p" width="36" height="14" viewBox="0 0 36 14"><title>销售部</title><g stroke="currentColor" transform="translate(0,-1)"><use href="#g9500" x="0"/><use href="#g552e" x="12"/><use href="#g90e8" x="24"/></g></svg></div>
<svg style="left:70px;top:489px" width="12" height="12" viewBox="0 0 12 12" shape-rendering="crispEdges"><path d="M0.500 1.500v10h11v-10H5.500l-1-1H1.500z" fill="#f4f27c" stroke="#000"/></svg>
<div class="t" style="left:91px;top:489px;"><svg class="p" width="36" height="14" viewBox="0 0 36 14"><title>采购部</title><g stroke="currentColor" transform="translate(0,-1)"><use href="#g91c7" x="0"/><use href="#g8d2d" x="12"/><use href="#g90e8" x="24"/></g></svg></div>
<svg style="left:70px;top:507px" width="13" height="12" viewBox="0 0 13 12" shape-rendering="crispEdges"><path d="M1 1.500h4" stroke="#000"/><path d="M1.500 10.500l2-6h3l1.500-1h4l-1.500 7z" fill="#f4f27c"/><path d="M1.500 10.500l2-6h3l1.500-1h3.500M12 3.500l-1 4" fill="none" stroke="#000"/></svg>
<div style="left:89px;top:504px;width:40px;height:18px;background:#2f63cc"></div>
<div class="t" style="left:91px;top:507px;color:#fff"><svg class="p" width="36" height="14" viewBox="0 0 36 14"><title>生产部</title><g stroke="currentColor" transform="translate(0,-1)"><use href="#g751f" x="0"/><use href="#g4ea7" x="12"/><use href="#g90e8" x="24"/></g></svg></div>
<svg style="left:70px;top:525px" width="12" height="12" viewBox="0 0 12 12" shape-rendering="crispEdges"><path d="M0.500 1.500v10h11v-10H5.500l-1-1H1.500z" fill="#f4f27c" stroke="#000"/></svg>
<div class="t" style="left:91px;top:525px;"><svg class="p" width="36" height="14" viewBox="0 0 36 14"><title>工程部</title><g stroke="currentColor" transform="translate(0,-1)"><use href="#g5de5" x="0"/><use href="#g7a0b" x="12"/><use href="#g90e8" x="24"/></g></svg></div>
<svg style="left:70px;top:543px" width="12" height="12" viewBox="0 0 12 12" shape-rendering="crispEdges"><path d="M0.500 1.500v10h11v-10H5.500l-1-1H1.500z" fill="#f4f27c" stroke="#000"/></svg>
<div class="t" style="left:91px;top:543px;"><svg class="p" width="36" height="14" viewBox="0 0 36 14"><title>综合部</title><g stroke="currentColor" transform="translate(0,-1)"><use href="#g7efc" x="0"/><use href="#g5408" x="12"/><use href="#g90e8" x="24"/></g></svg></div>
<svg style="left:70px;top:561px" width="12" height="12" viewBox="0 0 12 12" shape-rendering="crispEdges"><path d="M0.500 1.500v10h11v-10H5.500l-1-1H1.500z" fill="#f4f27c" stroke="#000"/></svg>
<div class="t" style="left:91px;top:561px;"><svg class="p" width="36" height="14" viewBox="0 0 36 14"><title>产品部</title><g stroke="currentColor" transform="translate(0,-1)"><use href="#g4ea7" x="0"/><use href="#g54c1" x="12"/><use href="#g90e8" x="24"/></g></svg></div>
<svg style="left:70px;top:579px" width="12" height="12" viewBox="0 0 12 12" shape-rendering="crispEdges"><path d="M0.500 1.500v10h11v-10H5.500l-1-1H1.500z" fill="#f4f27c" stroke="#000"/></svg>
<div class="t" style="left:91px;top:579px;"><svg class="p" width="36" height="14" viewBox="0 0 36 14"><title>发展部</title><g stroke="currentColor" transform="translate(0,-1)"><use href="#g53d1" x="0"/><use href="#g5c55" x="12"/><use href="#g90e8" x="24"/></g></svg></div>
<svg style="left:70px;top:597px" width="12" height="12" viewBox="0 0 12 12" shape-rendering="crispEdges"><path d="M0.500 1.500v10h11v-10H5.500l-1-1H1.500z" fill="#f4f27c" stroke="#000"/></svg>
<div class="t" style="left:91px;top:597px;"><svg class="p" width="36" height="14" viewBox="0 0 36 14"><title>零售部</title><g stroke="currentColor" transform="translate(0,-1)"><use href="#g96f6" x="0"/><use href="#g552e" x="12"/><use href="#g90e8" x="24"/></g></svg></div>
<svg style="left:70px;top:615px" width="12" height="12" viewBox="0 0 12 12" shape-rendering="crispEdges"><path d="M0.500 1.500v10h11v-10H5.500l-1-1H1.500z" fill="#f4f27c" stroke="#000"/></svg>
<div class="t" style="left:91px;top:615px;"><svg class="p" width="36" height="14" viewBox="0 0 36 14"><title>直营部</title><g stroke="currentColor" transform="translate(0,-1)"><use href="#g76f4" x="0"/><use href="#g8425" x="12"/><use href="#g90e8" x="24"/></g></svg></div>
<svg style="left:70px;top:633px" width="12" height="12" viewBox="0 0 12 12" shape-rendering="crispEdges"><path d="M0.500 1.500v10h11v-10H5.500l-1-1H1.500z" fill="#f4f27c" stroke="#000"/></svg>
<div class="t" style="left:91px;top:633px;"><svg class="p" width="36" height="14" viewBox="0 0 36 14"><title>品控部</title><g stroke="currentColor" transform="translate(0,-1)"><use href="#g54c1" x="0"/><use href="#g63a7" x="12"/><use href="#g90e8" x="24"/></g></svg></div>
<svg style="left:70px;top:651px" width="12" height="12" viewBox="0 0 12 12" shape-rendering="crispEdges"><path d="M0.500 1.500v10h11v-10H5.500l-1-1H1.500z" fill="#f4f27c" stroke="#000"/></svg>
<div class="t" style="left:91px;top:651px;"><svg class="p" width="36" height="14" viewBox="0 0 36 14"><title>工会科</title><g stroke="currentColor" transform="translate(0,-1)"><use href="#g5de5" x="0"/><use href="#g4f1a" x="12"/><use href="#g79d1" x="24"/></g></svg></div>
<svg style="left:70px;top:669px" width="12" height="12" viewBox="0 0 12 12" shape-rendering="crispEdges"><path d="M0.500 1.500v10h11v-10H5.500l-1-1H1.500z" fill="#f4f27c" stroke="#000"/></svg>
<div class="t" style="left:91px;top:669px;"><svg class="p" width="36" height="14" viewBox="0 0 36 14"><title>保卫科</title><g stroke="currentColor" transform="translate(0,-1)"><use href="#g4fdd" x="0"/><use href="#g536b" x="12"/><use href="#g79d1" x="24"/></g></svg></div>
<div style="left:198px;top:364px;width:113px;height:67px;background:#ececec"></div>
<div style="left:198px;top:431px;width:113px;height:266px;background:#fff"></div>
<div class="t" style="left:202px;top:371px;"><svg class="p" width="48" height="14" viewBox="0 0 48 14"><title>选择分组</title><g stroke="currentColor" transform="translate(0,-1)"><use href="#g9009" x="0"/><use href="#g62e9" x="12"/><use href="#g5206" x="24"/><use href="#g7ec4" x="36"/></g></svg></div>
<div class="cb" style="left:202px;top:394px;width:107px;height:22px;"></div>
<div class="btn" style="left:291px;top:396px;width:16px;height:18px;"></div>
<div class="arr" style="left:295px;top:403px;width:0px;height:0px;"></div>
<div style="left:198px;top:432px;width:95px;height:132px;background:#a9c9b3"></div>
<div style="left:199px;top:433px;width:16px;height:20px;background:#d9ece3"></div>
<div style="left:202px;top:441px;width:7px;height:1px;background:#0000a0"></div>
<div style="left:216px;top:433px;width:76px;height:20px;background:#d9ece3"></div>
<div class="t" style="left:242px;top:436px;color:#00009c"><svg class="p" width="24" height="14" viewBox="0 0 24 14"><title>姓名</title><g stroke="currentColor" transform="translate(0,-1)"><use href="#g59d3" x="0"/><use href="#g540d" x="12"/></g></svg></div>
<div style="left:199px;top:454px;width:16px;height:21px;background:#d9ece3"></div>
<svg style="left:201px;top:458px" width="11" height="11" viewBox="0 0 11 11"><path d="M5.500 0L11 5.500 5.500 11 0 5.500z" fill="#0000a8"/></svg>
<div style="left:216px;top:454px;width:76px;height:21px;background:#5563ea"></div>
<div class="t" style="left:219px;top:457px;color:#fff"><svg class="p" width="36" height="14" viewBox="0 0 36 14"><title>王丽东</title><g stroke="currentColor" transform="translate(0,-1)"><use href="#g738b" x="0"/><use href="#g4e3d" x="12"/><use href="#g4e1c" x="24"/></g></svg></div>
<div style="left:199px;top:476px;width:16px;height:21px;background:#d9ece3"></div>
<div style="left:216px;top:476px;width:76px;height:21px;background:#ffffff"></div>
<div class="t" style="left:219px;top:479px;color:#000"><svg class="p" width="36" height="14" viewBox="0 0 36 14"><title>赵志光</title><g stroke="currentColor" transform="translate(0,-1)"><use href="#g8d75" x="0"/><use href="#g5fd7" x="12"/><use href="#g5149" x="24"/></g></svg></div>
<div style="left:199px;top:498px;width:16px;height:21px;background:#d9ece3"></div>
<div style="left:216px;top:498px;width:76px;height:21px;background:#f0fcfc"></div>
<div class="t" style="left:219px;top:501px;color:#000"><svg class="p" width="36" height="14" viewBox="0 0 36 14"><title>马永亮</title><g stroke="currentColor" transform="translate(0,-1)"><use href="#g9a6c" x="0"/><use href="#g6c38" x="12"/><use href="#g4eae" x="24"/></g></svg></div>
<div style="left:199px;top:520px;width:16px;height:21px;background:#d9ece3"></div>
<div style="left:216px;top:520px;width:76px;height:21px;background:#ffffff"></div>
<div class="t" style="left:219px;top:523px;color:#000"><svg class="p" width="36" height="14" viewBox="0 0 36 14"><title>张耀忠</title><g stroke="currentColor" transform="translate(0,-1)"><use href="#g5f20" x="0"/><use href="#g8000" x="12"/><use href="#g5fe0" x="24"/></g></svg></div>
<div style="left:199px;top:542px;width:16px;height:21px;background:#d9ece3"></div>
<div style="left:216px;top:542px;width:76px;height:21px;background:#f0fcfc"></div>
<div class="t" style="left:219px;top:545px;color:#000"><svg class="p" width="36" height="14" viewBox="0 0 36 14"><title>吴学三</title><g stroke="currentColor" transform="translate(0,-1)"><use href="#g5434" x="0"/><use href="#g5b66" x="12"/><use href="#g4e09" x="24"/></g></svg></div>
<div style="left:311px;top:364px;width:434px;height:333px;background:#fff"></div>
<div style="left:311px;top:365px;width:433px;height:145px;background:#ececec;border:1px solid #000;box-shadow:inset 1px 1px 0 #fff"></div>
<div class="t" style="left:324px;top:379px;"><svg class="p" width="48" height="14" viewBox="0 0 48 14"><title>工作日期</title><g stroke="currentColor" transform="translate(0,-1)"><use href="#g5de5" x="0"/><use href="#g4f5c" x="12"/><use href="#g65e5" x="24"/><use href="#g671f" x="36"/></g></svg></div>
<div style="left:378px;top:375px;width:132px;height:21px;background:#fff;border:1px solid #000"></div>
<div class="t" style="left:382px;top:378px;color:#000;word-spacing:1.5px">2008 <svg class="p" width="12" height="14" viewBox="0 0 12 14"><title>年</title><g stroke="currentColor" transform="translate(0,-1)"><use href="#g5e74" x="0"/></g></svg> 04 <svg class="p" width="12" height="14" viewBox="0 0 12 14"><title>月</title><g stroke="currentColor" transform="translate(0,-1)"><use href="#g6708" x="0"/></g></svg> 25 <svg class="p" width="12" height="14" viewBox="0 0 12 14"><title>日</title><g stroke="currentColor" transform="translate(0,-1)"><use href="#g65e5" x="0"/></g></svg></div>
<div class="t" style="left:324px;top:407px;"><svg class="p" width="48" height="14" viewBox="0 0 48 14"><title>产品种类</title><g stroke="currentColor" transform="translate(0,-1)"><use href="#g4ea7" x="0"/><use href="#g54c1" x="12"/><use href="#g79cd" x="24"/><use href="#g7c7b" x="36"/></g></svg></div>
<div class="cb" style="left:378px;top:403px;width:117px;height:21px;"></div>
<div class="btn" style="left:477px;top:405px;width:16px;height:17px;"></div>
<div class="arr" style="left:481px;top:411px;width:0px;height:0px;"></div>
<div class="t" style="left:382px;top:407px;"><svg class="p" width="48" height="14" viewBox="0 0 48 14"><title>小熊玩具</title><g stroke="currentColor" transform="translate(0,-1)"><use href="#g5c0f" x="0"/><use href="#g718a" x="12"/><use href="#g73a9" x="24"/><use href="#g5177" x="36"/></g></svg></div>
<div style="left:509px;top:417px;width:1px;height:1px;background:#000"></div>
<div style="left:512px;top:417px;width:1px;height:1px;background:#000"></div>
<div style="left:515px;top:417px;width:1px;height:1px;background:#000"></div>
<div class="t" style="left:324px;top:435px;color:#0000b8"><svg class="p" width="48" height="14" viewBox="0 0 48 14"><title>员工姓名</title><g stroke="currentColor" transform="translate(0,-1)"><use href="#g5458" x="0"/><use href="#g5de5" x="12"/><use href="#g59d3" x="24"/><use href="#g540d" x="36"/></g></svg></div>
<div class="cb" style="left:378px;top:431px;width:117px;height:21px;"></div>
<div class="btn" style="left:477px;top:433px;width:16px;height:17px;"></div>
<div class="arr" style="left:481px;top:439px;width:0px;height:0px;"></div>
<div class="t" style="left:382px;top:434px;"><svg class="p" width="36" height="14" viewBox="0 0 36 14"><title>黄卫忠</title><g stroke="currentColor" transform="translate(0,-1)"><use href="#g9ec4" x="0"/><use href="#g536b" x="12"/><use href="#g5fe0" x="24"/></g></svg></div>
<div style="left:509px;top:445px;width:1px;height:1px;background:#000"></div>
<div style="left:512px;top:445px;width:1px;height:1px;background:#000"></div>
<div style="left:515px;top:445px;width:1px;height:1px;background:#000"></div>
<div class="t" style="left:324px;top:464px;"><svg class="p" width="24" height="14" viewBox="0 0 24 14"><title>单价</title><g stroke="currentColor" transform="translate(0,-1)"><use href="#g5355" x="0"/><use href="#g4ef7" x="12"/></g></svg></div>
<div style="left:378px;top:458px;width:74px;height:22px;background:#fff;border:1px solid #000"></div>
<div class="t" style="left:382px;top:461px;color:#000;word-spacing:0px">1.255</div>
<div class="t" style="left:462px;top:464px;"><svg class="p" width="12" height="14" viewBox="0 0 12 14"><title>元</title><g stroke="currentColor" transform="translate(0,-1)"><use href="#g5143" x="0"/></g></svg></div>
<div class="t" style="left:533px;top:379px;"><svg class="p" width="48" height="14" viewBox="0 0 48 14"><title>操作工序</title><g stroke="currentColor" transform="translate(0,-1)"><use href="#g64cd" x="0"/><use href="#g4f5c" x="12"/><use href="#g5de5" x="24"/><use href="#g5e8f" x="36"/></g></svg></div>
<div class="cb" style="left:584px;top:375px;width:124px;height:20px;"></div>
<div class="btn" style="left:690px;top:377px;width:16px;height:16px;"></div>
<div class="arr" style="left:694px;top:383px;width:0px;height:0px;"></div>
<div class="t" style="left:588px;top:379px;"><svg class="p" width="24" height="14" viewBox="0 0 24 14"><title>打磨</title><g stroke="currentColor" transform="translate(0,-1)"><use href="#g6253" x="0"/><use href="#g78e8" x="12"/></g></svg></div>
<div style="left:719px;top:389px;width:1px;height:1px;background:#000"></div>
<div style="left:722px;top:389px;width:1px;height:1px;background:#000"></div>
<div style="left:725px;top:389px;width:1px;height:1px;background:#000"></div>
<div class="t" style="left:533px;top:407px;"><svg class="p" width="48" height="14" viewBox="0 0 48 14"><title>订单编号</title><g stroke="currentColor" transform="translate(0,-1)"><use href="#g8ba2" x="0"/><use href="#g5355" x="12"/><use href="#g7f16" x="24"/><use href="#g53f7" x="36"/></g></svg></div>
<div class="cb" style="left:584px;top:403px;width:124px;height:20px;"></div>
<div class="btn" style="left:690px;top:405px;width:16px;height:16px;"></div>
<div class="arr" style="left:694px;top:411px;width:0px;height:0px;"></div>
<div style="left:719px;top:417px;width:1px;height:1px;background:#000"></div>
<div style="left:722px;top:417px;width:1px;height:1px;background:#000"></div>
<div style="left:725px;top:417px;width:1px;height:1px;background:#000"></div>
<div class="t" style="left:533px;top:435px;color:#0000b8"><svg class="p" width="24" height="14" viewBox="0 0 24 14"><title>数量</title><g stroke="currentColor" transform="translate(0,-1)"><use href="#g6570" x="0"/><use href="#g91cf" x="12"/></g></svg></div>
<div style="left:584px;top:430px;width:86px;height:21px;background:#fff;border:1px solid #000"></div>
<div class="t" style="left:588px;top:433px;color:#000;word-spacing:0px">0</div>
<div class="t" style="left:533px;top:464px;color:#800080"><svg class="p" width="24" height="14" viewBox="0 0 24 14"><title>金额</title><g stroke="currentColor" transform="translate(0,-1)"><use href="#g91d1" x="0"/><use href="#g989d" x="12"/></g></svg></div>
<div style="left:584px;top:458px;width:87px;height:22px;background:#fff;border:1px solid #000"></div>
<div class="t" style="left:588px;top:461px;color:#800080;word-spacing:0px">0</div>
<div class="t" style="left:682px;top:464px;color:#800080"><svg class="p" width="12" height="14" viewBox="0 0 12 14"><title>元</title><g stroke="currentColor" transform="translate(0,-1)"><use href="#g5143" x="0"/></g></svg></div>
<div class="t" style="left:540px;top:488px;color:rgba(255,255,255,.3)"><svg class="p" width="156" height="14" viewBox="0 0 156 14"><title>开发组织  在线项目软件开发</title><g stroke="currentColor" transform="translate(0,-1)"><use href="#g5f00" x="0"/><use href="#g53d1" x="12"/><use href="#g7ec4" x="24"/><use href="#g7ec7" x="36"/><use href="#g5728" x="60"/><use href="#g7ebf" x="72"/><use href="#g9879" x="84"/><use href="#g76ee" x="96"/><use href="#g8f6f" x="108"/><use href="#g4ef6" x="120"/><use href="#g5f00" x="132"/><use href="#g53d1" x="144"/></g></svg></div>
<div style="left:311px;top:510px;width:132px;height:88px;background:#a9c9b3"></div>
<div style="left:312px;top:511px;width:16px;height:20px;background:#d9ece3"></div>
<div style="left:315px;top:519px;width:7px;height:1px;background:#0000a0"></div>
<div style="left:329px;top:511px;width:113px;height:20px;background:#d9ece3"></div>
<div class="t" style="left:361px;top:513px;color:#00009c"><svg class="p" width="48" height="14" viewBox="0 0 48 14"><title>生产工序</title><g stroke="currentColor" transform="translate(0,-1)"><use href="#g751f" x="0"/><use href="#g4ea7" x="12"/><use href="#g5de5" x="24"/><use href="#g5e8f" x="36"/></g></svg></div>
<div style="left:312px;top:532px;width:16px;height:21px;background:#d9ece3"></div>
<svg style="left:314px;top:536px" width="11" height="11" viewBox="0 0 11 11"><path d="M5.500 0L11 5.500 5.500 11 0 5.500z" fill="#0000a8"/></svg>
<div style="left:329px;top:532px;width:113px;height:21px;background:#5563ea"></div>
<div class="t" style="left:332px;top:535px;color:#fff"><svg class="p" width="24" height="14" viewBox="0 0 24 14"><title>打磨</title><g stroke="currentColor" transform="translate(0,-1)"><use href="#g6253" x="0"/><use href="#g78e8" x="12"/></g></svg></div>
<div style="left:312px;top:554px;width:16px;height:21px;background:#d9ece3"></div>
<div style="left:329px;top:554px;width:113px;height:21px;background:#ffffff"></div>
<div class="t" style="left:332px;top:557px;color:#000"><svg class="p" width="24" height="14" viewBox="0 0 24 14"><title>抛光</title><g stroke="currentColor" transform="translate(0,-1)"><use href="#g629b" x="0"/><use href="#g5149" x="12"/></g></svg></div>
<div style="left:312px;top:576px;width:16px;height:21px;background:#d9ece3"></div>
<div style="left:329px;top:576px;width:113px;height:21px;background:#f0fcfc"></div>
<div style="left:462px;top:510px;width:109px;height:88px;background:#a9c9b3"></div>
<div style="left:463px;top:511px;width:16px;height:20px;background:#d9ece3"></div>
<div style="left:466px;top:519px;width:7px;height:1px;background:#0000a0"></div>
<div style="left:480px;top:511px;width:90px;height:20px;background:#d9ece3"></div>
<div class="t" style="left:501px;top:513px;color:#00009c"><svg class="p" width="48" height="14" viewBox="0 0 48 14"><title>产品名称</title><g stroke="currentColor" transform="translate(0,-1)"><use href="#g4ea7" x="0"/><use href="#g54c1" x="12"/><use href="#g540d" x="24"/><use href="#g79f0" x="36"/></g></svg></div>
<div style="left:463px;top:532px;width:16px;height:21px;background:#d9ece3"></div>
<div style="left:480px;top:532px;width:90px;height:21px;background:#5563ea"></div>
<div class="t" style="left:483px;top:535px;color:#fff"><svg class="p" width="48" height="14" viewBox="0 0 48 14"><title>小熊玩具</title><g stroke="currentColor" transform="translate(0,-1)"><use href="#g5c0f" x="0"/><use href="#g718a" x="12"/><use href="#g73a9" x="24"/><use href="#g5177" x="36"/></g></svg></div>
<div style="left:463px;top:554px;width:16px;height:21px;background:#d9ece3"></div>
<div style="left:480px;top:554px;width:90px;height:21px;background:#ffffff"></div>
<div class="t" style="left:483px;top:557px;color:#000"><svg class="p" width="36" height="14" viewBox="0 0 36 14"><title>文具盒</title><g stroke="currentColor" transform="translate(0,-1)"><use href="#g6587" x="0"/><use href="#g5177" x="12"/><use href="#g76d2" x="24"/></g></svg></div>
<div style="left:463px;top:576px;width:16px;height:21px;background:#d9ece3"></div>
<div style="left:480px;top:576px;width:90px;height:21px;background:#f0fcfc"></div>
<div style="left:590px;top:510px;width:134px;height:88px;background:#a9c9b3"></div>
<div style="left:591px;top:511px;width:16px;height:20px;background:#d9ece3"></div>
<div style="left:594px;top:519px;width:7px;height:1px;background:#0000a0"></div>
<div style="left:608px;top:511px;width:115px;height:20px;background:#d9ece3"></div>
<div class="t" style="left:653px;top:513px;color:#00009c"><svg class="p" width="24" height="14" viewBox="0 0 24 14"><title>工单</title><g stroke="currentColor" transform="translate(0,-1)"><use href="#g5de5" x="0"/><use href="#g5355" x="12"/></g></svg></div>
<div style="left:591px;top:532px;width:16px;height:21px;background:#d9ece3"></div>
<svg style="left:593px;top:536px" width="11" height="11" viewBox="0 0 11 11"><path d="M5.500 0L11 5.500 5.500 11 0 5.500z" fill="#0000a8"/></svg>
<div style="left:608px;top:532px;width:115px;height:21px;background:#5563ea"></div>
<div class="t" style="left:611px;top:535px;color:#fff">AFD20080303</div>
<div style="left:591px;top:554px;width:16px;height:21px;background:#d9ece3"></div>
<div style="left:608px;top:554px;width:115px;height:21px;background:#ffffff"></div>
<div class="t" style="left:611px;top:557px;color:#000">AFD20081212</div>
<div style="left:591px;top:576px;width:16px;height:21px;background:#d9ece3"></div>
<div style="left:608px;top:576px;width:115px;height:21px;background:#f0fcfc"></div>
<div style="left:745px;top:364px;width:1px;height:333px;background:#fff"></div>
<div style="left:746px;top:364px;width:80px;height:333px;background:#e4e8d9"></div>
<div style="left:826px;top:364px;width:1px;height:333px;background:#fff"></div>
<div style="left:827px;top:364px;width:1px;height:333px;background:#d2e2f2"></div>
<div style="left:828px;top:364px;width:1px;height:333px;background:#b8f0ff"></div>
<div style="left:829px;top:364px;width:1px;height:333px;background:#408898"></div>
<div style="left:46px;top:364px;width:2px;height:333px;background:#d8dcd8"></div>
<div style="left:48px;top:364px;width:1px;height:333px;background:#a0a0a0"></div>
<div style="left:49px;top:364px;width:1px;height:333px;background:#707070"></div>
<div style="left:50px;top:364px;width:1px;height:333px;background:#fff"></div>
<svg style="left:760px;top:375px" width="17" height="10" viewBox="0 0 17 10" shape-rendering="crispEdges"><path d="M0 4l4-3h7l2 1h3v7h-3l-1 1H5L3 8 0 6z" fill="#fff" stroke="#000"/><path d="M13 2h3v7h-3z" fill="#000"/><path d="M5 4h5M5 6h4" stroke="#000"/></svg>
<div class="t" style="left:780px;top:373px;"><svg class="p" width="33" height="14" viewBox="0 0 33 14"><title>向前 L</title><g stroke="currentColor" transform="translate(0,-1)"><use href="#g5411" x="0"/><use href="#g524d" x="12"/><use href="#g4c" x="27"/><path d="M27 13.5h6"/></g></svg></div>
<svg style="left:759px;top:400px" width="17" height="10" viewBox="0 0 17 10" shape-rendering="crispEdges"><path d="M17 4l-4-3H6L4 2H1v7h3l1 1h7l2-2 3-2z" fill="#fff" stroke="#000"/><path d="M0 2h4v7H0z" fill="#000"/><path d="M7 4h5M8 6h4" stroke="#000"/></svg>
<div class="t" style="left:780px;top:398px;"><svg class="p" width="34" height="14" viewBox="0 0 34 14"><title>向后 N</title><g stroke="currentColor" transform="translate(0,-1)"><use href="#g5411" x="0"/><use href="#g540e" x="12"/><use href="#g4e" x="27"/><path d="M27 13.5h7"/></g></svg></div>
<svg style="left:762px;top:422px" width="14" height="16" viewBox="0 0 14 16" shape-rendering="crispEdges"><path d="M1.500 0.500h11v11l-3 3h-8z" fill="#fff" stroke="#000" stroke-width="1"/><path d="M9.500 14v-2.500h3" fill="none" stroke="#000"/><path d="M3 1h4v2h3v4H7v2H3V7H0V3h3z" fill="#0000c8"/><path d="M7 7h3v1H8v1H7z" fill="#9090e0"/><path d="M4 11h2v1H4z" fill="#40a040"/></svg>
<div class="t" style="left:780px;top:423px;"><svg class="p" width="35" height="14" viewBox="0 0 35 14"><title>新增 A</title><g stroke="currentColor" transform="translate(0,-1)"><use href="#g65b0" x="0"/><use href="#g589e" x="12"/><use href="#g41" x="27"/><path d="M27 13.5h8"/></g></svg></div>
<svg style="left:761px;top:447px" width="15" height="15" viewBox="0 0 15 15" shape-rendering="crispEdges"><path d="M0.5 0.5h14v14h-12l-2-2z" fill="#fff" stroke="#000"/><path d="M3 1h9v6H3z" fill="#fff" stroke="#000"/><path d="M4 10h8v5H4z" fill="#404040"/><path d="M6 11h2v3H6z" fill="#fff"/></svg>
<div class="t" style="left:780px;top:448px;"><svg class="p" width="33" height="14" viewBox="0 0 33 14"><title>保存 S</title><g stroke="currentColor" transform="translate(0,-1)"><use href="#g4fdd" x="0"/><use href="#g5b58" x="12"/><use href="#g53" x="27"/><path d="M27 13.5h6"/></g></svg></div>
<svg style="left:760px;top:472px" width="15" height="15" viewBox="0 0 15 15"><rect x=".5" y=".5" width="14" height="14" rx="5" fill="#e01a1a" stroke="#8a0000" stroke-width="1"/><path d="M5 5l5 5M10 5l-5 5" stroke="#fff" stroke-width="2.200" stroke-linecap="round"/></svg>
<div class="t" style="left:780px;top:473px;"><svg class="p" width="35" height="14" viewBox="0 0 35 14"><title>删除 D</title><g stroke="currentColor" transform="translate(0,-1)"><use href="#g5220" x="0"/><use href="#g9664" x="12"/><use href="#g44" x="27"/><path d="M27 13.5h8"/></g></svg></div>
<svg style="left:761px;top:616px" width="14" height="17" viewBox="0 0 14 17" shape-rendering="crispEdges"><path d="M0.5 0.5h9l4 4v12h-13z" fill="#fff" stroke="#000"/><path d="M9.5 0.5v4h4" fill="none" stroke="#000"/><path d="M4 8a3 3 0 0 1 5-2l1-1v4H6l1.5-1.500a2 2 0 0 0-2.500 1z M10 10a3 3 0 0 1-5 2l-1 1V9h4l-1.500 1.500a2 2 0 0 0 2.500-1z" fill="#108030"/></svg>
<div class="t" style="left:779px;top:618px;"><svg class="p" width="34" height="14" viewBox="0 0 34 14"><title>刷新 R</title><g stroke="currentColor" transform="translate(0,-1)"><use href="#g5237" x="0"/><use href="#g65b0" x="12"/><use href="#g52" x="27"/><path d="M27 13.5h7"/></g></svg></div>
<div style="left:45px;top:363px;width:782px;height:1px;background:#c4c4c4"></div>
<div style="left:48px;top:364px;width:779px;height:1px;background:#8c8c8c"></div>
<div style="left:745px;top:364px;width:82px;height:1px;background:#b8b8b0"></div>
<div style="left:745px;top:365px;width:1px;height:332px;background:#b8b8b0"></div>
<div style="left:1px;top:697px;width:953px;height:27px;background:#f2f2f2;border-top:1px solid #fff"></div>
<div style="left:5px;top:702px;width:148px;height:21px;border:1px solid;border-color:#a8a8a8 #fff #fff #a8a8a8"></div>
<div class="t" style="left:16px;top:705px;"><svg class="p" width="48" height="14" viewBox="0 0 48 14"><title>开发组织</title><g stroke="currentColor" transform="translate(0,-1)"><use href="#g5f00" x="0"/><use href="#g53d1" x="12"/><use href="#g7ec4" x="24"/><use href="#g7ec7" x="36"/></g></svg> www.onlyit.cn</div>
<div style="left:156px;top:702px;width:58px;height:21px;border:1px solid;border-color:#a8a8a8 #fff #fff #a8a8a8"></div>
<div class="t" style="left:167px;top:705px;"><svg class="p" width="36" height="14" viewBox="0 0 36 14"><title>操作员</title><g stroke="currentColor" transform="translate(0,-1)"><use href="#g64cd" x="0"/><use href="#g4f5c" x="12"/><use href="#g5458" x="24"/></g></svg></div>
<div style="left:216px;top:702px;width:58px;height:21px;border:1px solid;border-color:#a8a8a8 #fff #fff #a8a8a8"></div>
<div class="t" style="left:231px;top:705px;">admin</div>
<div style="left:276px;top:702px;width:58px;height:21px;border:1px solid;border-color:#a8a8a8 #fff #fff #a8a8a8"></div>
<div class="t" style="left:293px;top:705px;"><svg class="p" width="24" height="14" viewBox="0 0 24 14"><title>工号</title><g stroke="currentColor" transform="translate(0,-1)"><use href="#g5de5" x="0"/><use href="#g53f7" x="12"/></g></svg></div>
<div style="left:336px;top:702px;width:58px;height:21px;border:1px solid;border-color:#a8a8a8 #fff #fff #a8a8a8"></div>
<div style="left:396px;top:702px;width:200px;height:21px;border:1px solid;border-color:#a8a8a8 #fff #fff #a8a8a8"></div>
<div class="t" style="left:401px;top:705px;">2008-04-25 14:13:54 (<svg class="p" width="36" height="14" viewBox="0 0 36 14"><title>星期五</title><g stroke="currentColor" transform="translate(0,-1)"><use href="#g661f" x="0"/><use href="#g671f" x="12"/><use href="#g4e94" x="24"/></g></svg>)</div>
<div style="left:598px;top:702px;width:357px;height:21px;border-top:1px solid #a0a0a0;border-left:1px solid #a8a8a8"></div>
<svg style="left:942px;top:711px" width="14" height="14" viewBox="0 0 14 14" shape-rendering="crispEdges"><path d="M13 1L1 13M13 5L5 13M13 9L9 13" stroke="#909090" stroke-width="1.200"/><path d="M13 2L2 13M13 6L6 13M13 10L10 13" stroke="#fff" stroke-width="1"/></svg>
</body></html>
